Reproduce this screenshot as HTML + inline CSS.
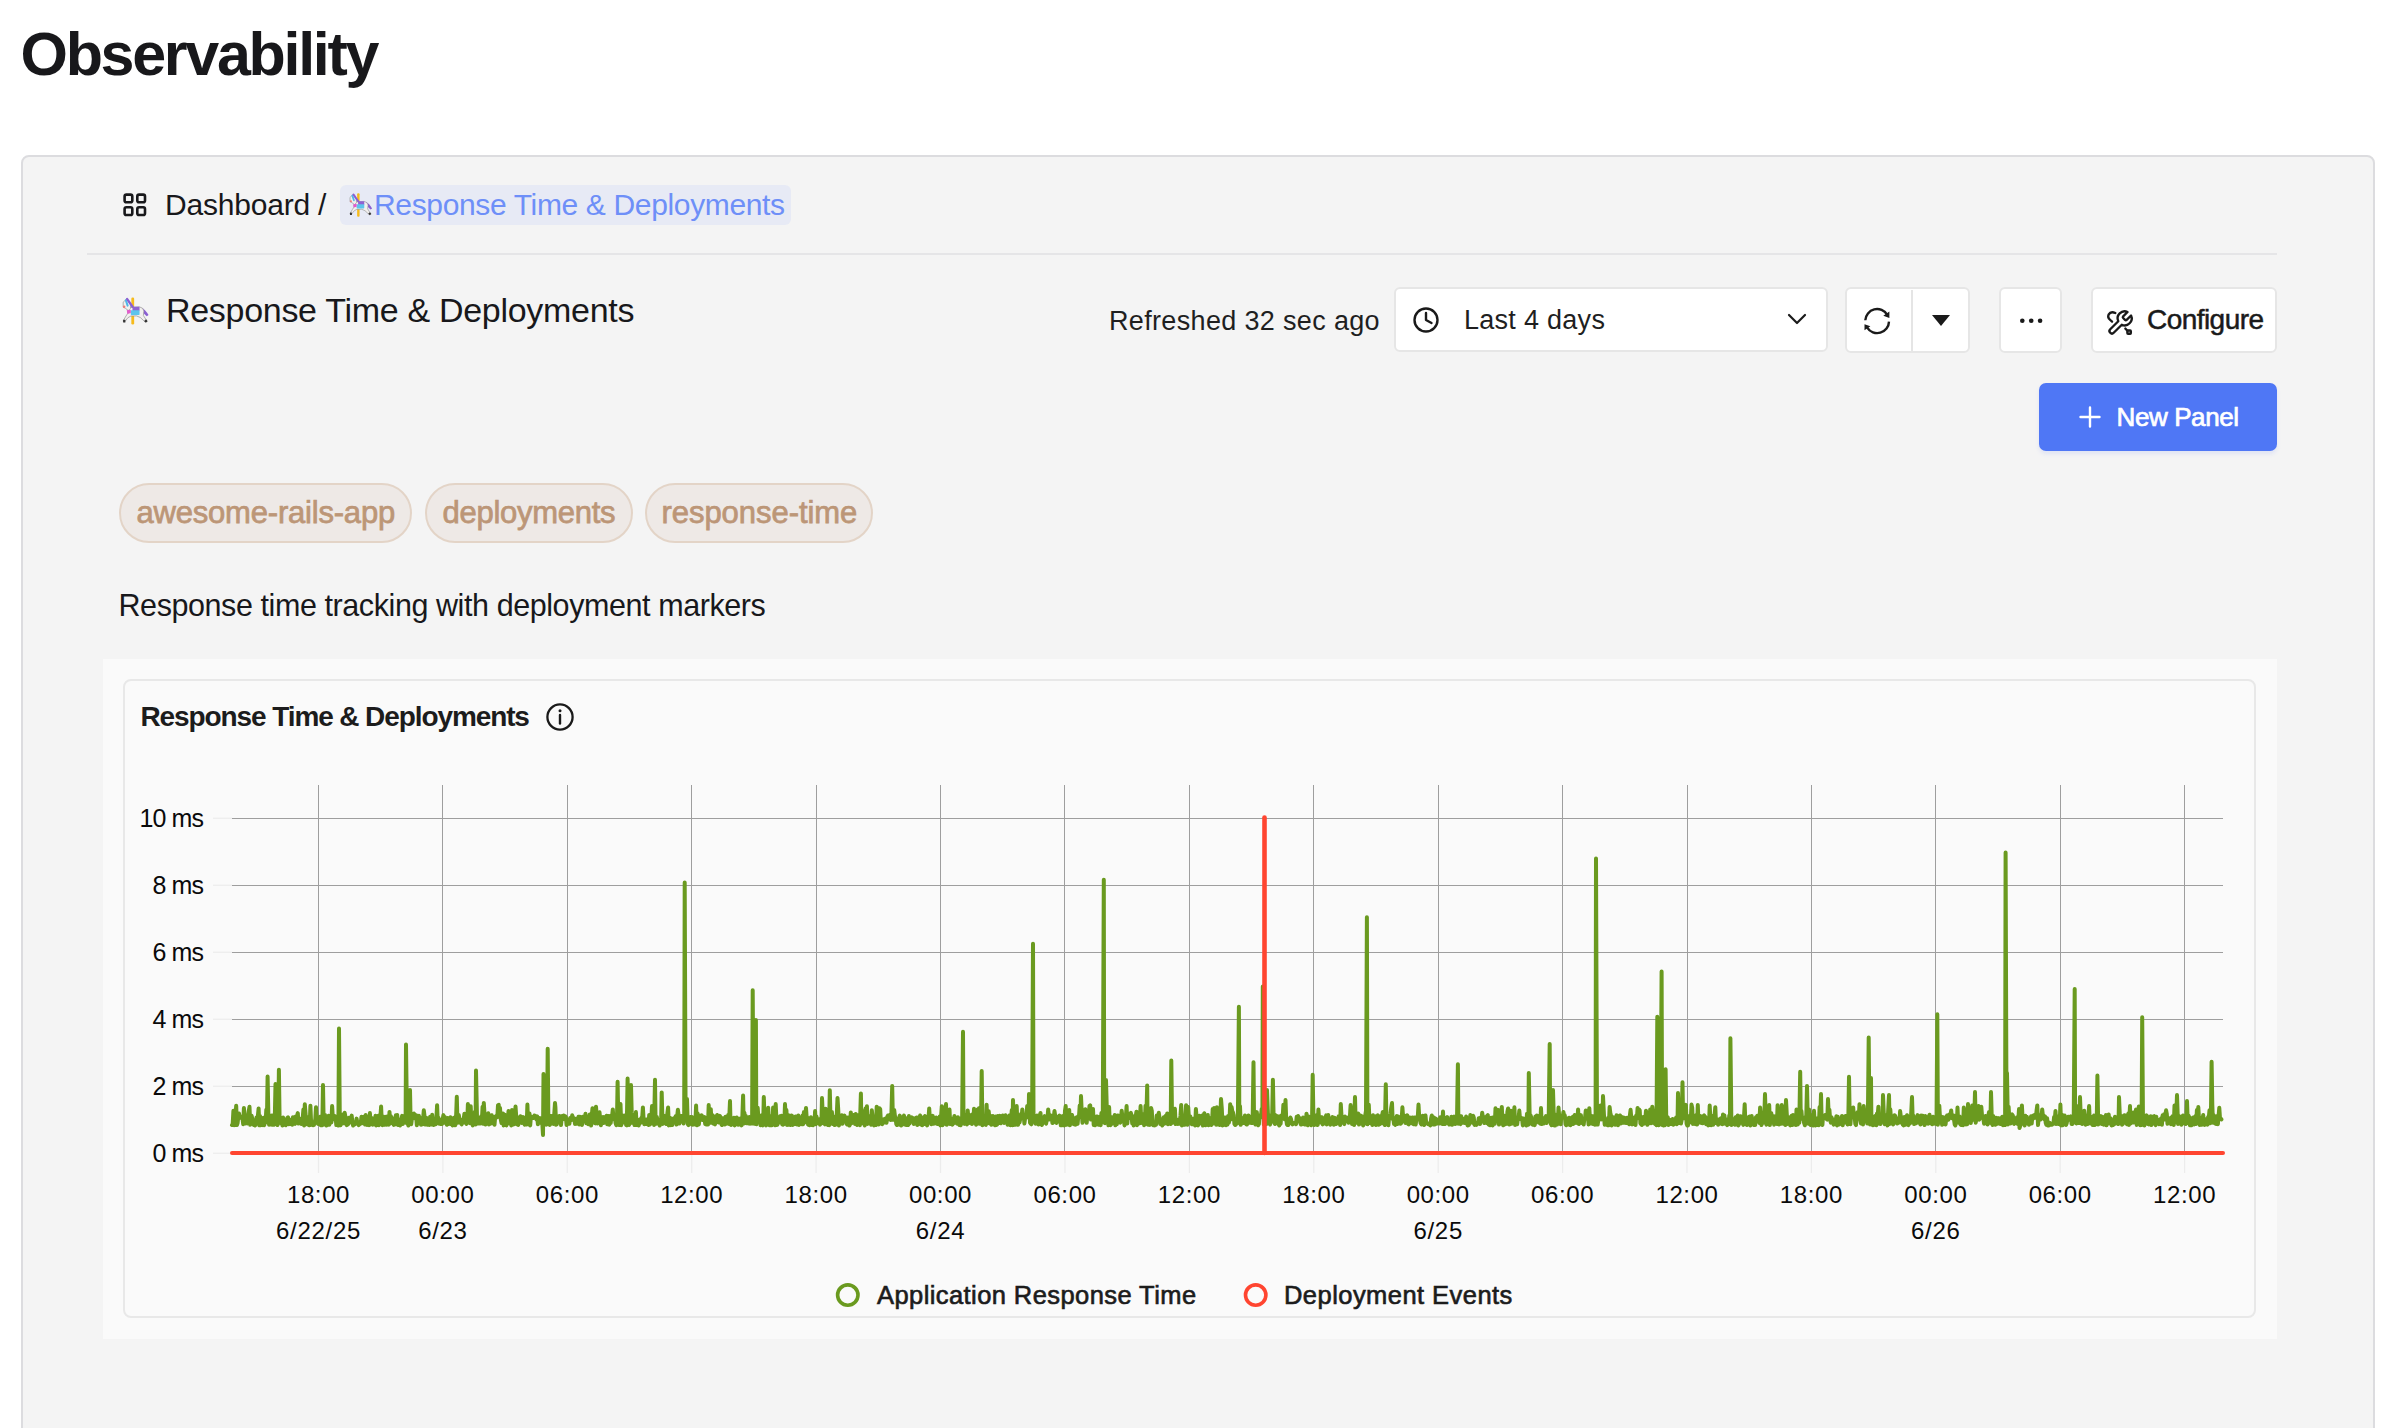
<!DOCTYPE html>
<html><head><meta charset="utf-8"><title>Observability</title>
<style>
html,body{margin:0;padding:0;width:2394px;height:1428px;overflow:hidden;background:#ffffff;font-family:"Liberation Sans", sans-serif;}
.t{position:absolute;white-space:nowrap;line-height:1;}
.c{text-align:center;}
.box{position:absolute;box-sizing:border-box;}
.btn{background:#fff;border:2px solid #e6e6e6;border-radius:6px;}
.ab{position:absolute;overflow:visible;}
</style></head><body>
<div class="t" style="left:20.5px;top:24.4px;font-size:61px;font-weight:700;color:#18181b;letter-spacing:-2.3px;">Observability</div>
<div class="box" style="left:21px;top:155px;width:2354px;height:1300px;border:2px solid #dcdcdf;border-radius:8px;background:#f4f4f4"></div>
<svg class="ab" style="left:120px;top:190px" width="30" height="30" viewBox="0 0 30 30">
<g fill="none" stroke="#18181b" stroke-width="2.6">
<rect x="4.6" y="4.6" width="7.7" height="7.7" rx="1.8"/><rect x="17.3" y="4.6" width="7.7" height="7.7" rx="1.8"/>
<rect x="4.6" y="17.3" width="7.7" height="7.7" rx="1.8"/><rect x="17.3" y="17.3" width="7.7" height="7.7" rx="1.8"/>
</g></svg>
<div class="t" style="left:165.0px;top:189.6px;font-size:30px;font-weight:400;color:#18181b;letter-spacing:-0.2px;">Dashboard /</div>
<div class="box" style="left:340px;top:185px;width:451px;height:40px;border-radius:6px;background:#e7eaf5"></div>
<svg class="ab" style="left:348.5px;top:193px" width="23.5" height="24" viewBox="0 0 24 24">
<rect x="8.3" y="0" width="2.5" height="24" rx="1.1" fill="#f6bb1c"/>
<path d="M17.3 9 Q20.8 10.5 23.6 15.6 L22 16.6 Q19.6 14.2 17.3 12.8 Z" fill="#8b5fd3"/>
<path d="M5.5 9 L15.5 8.3 Q19 9 19.5 12 L19 16 L21.8 20.3 L20.6 21.8 L16.3 17.8 L13 16.4 L8 16.4 L5.2 18 L2.4 21.6 L0.9 21 L3.5 16.5 L5.2 14 Z" fill="#f2f0ee" stroke="#8d8d8d" stroke-width="0.6" stroke-linejoin="round"/>
<path d="M1 4.2 L4.2 1.2 L7.6 6 L7.6 9.6 L5.6 11.6 L3 9.6 L1.1 8.6 Z" fill="#f2f0ee" stroke="#8d8d8d" stroke-width="0.6" stroke-linejoin="round"/>
<path d="M3.4 2.4 L5 7.2" stroke="#4fb6e8" stroke-width="1.8" stroke-linecap="round"/>
<path d="M4.6 1.4 L9.4 8.2" stroke="#8b5fd3" stroke-width="2.1" stroke-linecap="round"/>
<rect x="9.3" y="8.2" width="6.3" height="3.8" rx="0.6" fill="#8e63d2"/>
<rect x="7.8" y="11.3" width="7.8" height="4.2" rx="0.6" fill="#5ec4ec"/>
<path d="M4.2 11.4 L7.8 10.8 L7.8 13.8 L4.8 14.6 Z" fill="#e25ccb"/>
<circle cx="1.9" cy="8.2" r="1.1" fill="#f07a7a"/>
<rect x="1" y="19.8" width="2" height="2.4" fill="#333"/>
<rect x="20.2" y="19.8" width="2.2" height="2.3" fill="#333" transform="rotate(-40 21.3 21)"/>
</svg>
<div class="t" style="left:374.0px;top:189.6px;font-size:30px;font-weight:400;color:#6e8ff8;letter-spacing:-0.35px;">Response Time &amp; Deployments</div>
<div class="box" style="left:87px;top:253px;width:2190px;height:2px;background:#e5e5e7"></div>
<svg class="ab" style="left:121.5px;top:297px" width="27" height="28" viewBox="0 0 24 24">
<rect x="8.3" y="0" width="2.5" height="24" rx="1.1" fill="#f6bb1c"/>
<path d="M17.3 9 Q20.8 10.5 23.6 15.6 L22 16.6 Q19.6 14.2 17.3 12.8 Z" fill="#8b5fd3"/>
<path d="M5.5 9 L15.5 8.3 Q19 9 19.5 12 L19 16 L21.8 20.3 L20.6 21.8 L16.3 17.8 L13 16.4 L8 16.4 L5.2 18 L2.4 21.6 L0.9 21 L3.5 16.5 L5.2 14 Z" fill="#f2f0ee" stroke="#8d8d8d" stroke-width="0.6" stroke-linejoin="round"/>
<path d="M1 4.2 L4.2 1.2 L7.6 6 L7.6 9.6 L5.6 11.6 L3 9.6 L1.1 8.6 Z" fill="#f2f0ee" stroke="#8d8d8d" stroke-width="0.6" stroke-linejoin="round"/>
<path d="M3.4 2.4 L5 7.2" stroke="#4fb6e8" stroke-width="1.8" stroke-linecap="round"/>
<path d="M4.6 1.4 L9.4 8.2" stroke="#8b5fd3" stroke-width="2.1" stroke-linecap="round"/>
<rect x="9.3" y="8.2" width="6.3" height="3.8" rx="0.6" fill="#8e63d2"/>
<rect x="7.8" y="11.3" width="7.8" height="4.2" rx="0.6" fill="#5ec4ec"/>
<path d="M4.2 11.4 L7.8 10.8 L7.8 13.8 L4.8 14.6 Z" fill="#e25ccb"/>
<circle cx="1.9" cy="8.2" r="1.1" fill="#f07a7a"/>
<rect x="1" y="19.8" width="2" height="2.4" fill="#333"/>
<rect x="20.2" y="19.8" width="2.2" height="2.3" fill="#333" transform="rotate(-40 21.3 21)"/>
</svg>
<div class="t" style="left:166.0px;top:293.2px;font-size:34px;font-weight:400;color:#18181b;letter-spacing:-0.3px;">Response Time &amp; Deployments</div>
<div class="t" style="left:1109.0px;top:307.5px;font-size:27px;font-weight:400;color:#1f1f1f;letter-spacing:0.34px;">Refreshed 32 sec ago</div>
<div class="box btn" style="left:1394px;top:287px;width:434px;height:65px"></div>
<svg class="ab" style="left:1410px;top:304px" width="32" height="32" viewBox="0 0 32 32">
<circle cx="16" cy="16" r="11.5" fill="none" stroke="#1a1a1a" stroke-width="2.4"/>
<path d="M16 9 V16 L21.5 19" fill="none" stroke="#1a1a1a" stroke-width="2.4" stroke-linecap="round" stroke-linejoin="round"/></svg>
<div class="t" style="left:1464.0px;top:306.9px;font-size:27px;font-weight:400;color:#1f1f1f;letter-spacing:0.28px;">Last 4 days</div>
<svg class="ab" style="left:1786px;top:310px" width="22" height="20" viewBox="0 0 22 20">
<path d="M3 5 L11 13 L19 5" fill="none" stroke="#1a1a1a" stroke-width="2.2" stroke-linecap="round" stroke-linejoin="round"/></svg>
<div class="box btn" style="left:1845px;top:287px;width:125px;height:66px"></div>
<div class="box" style="left:1911px;top:290px;width:2px;height:61px;background:#e5e5e5"></div>
<svg class="ab" style="left:1860px;top:304px" width="34" height="34" viewBox="0 0 34 34">
<g fill="none" stroke="#1a1a1a" stroke-width="2.4" stroke-linecap="butt">
<path d="M5.3 16.3 A11.8 11.8 0 0 1 27.2 10.8"/><path d="M29 17.6 A11.8 11.8 0 0 1 7.2 23.6"/></g>
<path d="M29.4 7.6 L29.4 13.9 L23.3 11.8 Z" fill="#1a1a1a"/><path d="M4.5 20.2 L4.5 26.3 L10.4 22.2 Z" fill="#1a1a1a"/></svg>
<svg class="ab" style="left:1930px;top:313px" width="22" height="16" viewBox="0 0 22 16"><path d="M2 2 H20 L11 13 Z" fill="#1a1a1a"/></svg>
<div class="box btn" style="left:1999px;top:287px;width:63px;height:66px"></div>
<svg class="ab" style="left:2016px;top:312px" width="30" height="18" viewBox="0 0 30 18"><circle cx="6.3" cy="8.7" r="2.3" fill="#1a1a1a"/><circle cx="15.2" cy="8.7" r="2.3" fill="#1a1a1a"/><circle cx="24.1" cy="8.7" r="2.3" fill="#1a1a1a"/></svg>
<div class="box btn" style="left:2091px;top:287px;width:186px;height:66px"></div>
<svg class="ab" style="left:2106px;top:309px" width="28" height="28" viewBox="0 0 24 24">
<g fill="none" stroke="#1a1a1a" stroke-width="2" stroke-linecap="round" stroke-linejoin="round">
<path d="M14.7 6.3a1 1 0 0 0 0 1.4l1.6 1.6a1 1 0 0 0 1.4 0l3.77-3.77a6 6 0 0 1-7.94 7.94l-6.91 6.91a2.12 2.12 0 0 1-3-3l6.91-6.91a6 6 0 0 1 7.94-7.94l-3.76 3.76z"/>
<path d="M8 3.4 Q4 1.6 2.2 4.8 Q1.2 7.2 3.2 9 L5.2 10.8"/><path d="M16.6 16.8 L18.4 18.6"/><rect x="18.3" y="18.4" width="3" height="2.8" rx="0.6"/></g></svg>
<div class="t" style="left:2147.0px;top:305.9px;font-size:28px;font-weight:400;color:#1a1a1a;letter-spacing:-0.55px;-webkit-text-stroke:0.5px #1a1a1a;">Configure</div>
<div class="box" style="left:2039px;top:383px;width:238px;height:68px;border-radius:7px;background:#4f77f5;box-shadow:0 3px 4px rgba(79,119,245,0.12)"></div>
<svg class="ab" style="left:2078px;top:405px" width="24" height="24" viewBox="0 0 24 24"><path d="M12 2.5 V21.5 M2.5 12 H21.5" stroke="#fff" stroke-width="2.4" stroke-linecap="round"/></svg>
<div class="t" style="left:2116.5px;top:403.7px;font-size:26px;font-weight:400;color:#ffffff;letter-spacing:-0.4px;-webkit-text-stroke:0.7px #fff;">New Panel</div>
<div class="box" style="left:119px;top:483px;width:293px;height:60px;border:2px solid #e3d4c7;border-radius:30px;background:#eee9e6;box-sizing:border-box"></div>
<div class="t" style="left:136.5px;top:496.8px;font-size:31px;font-weight:400;color:#bc9677;letter-spacing:-0.2px;-webkit-text-stroke:0.75px #bc9677;">awesome-rails-app</div>
<div class="box" style="left:425px;top:483px;width:208px;height:60px;border:2px solid #e3d4c7;border-radius:30px;background:#eee9e6;box-sizing:border-box"></div>
<div class="t" style="left:442.5px;top:496.8px;font-size:31px;font-weight:400;color:#bc9677;letter-spacing:-0.27px;-webkit-text-stroke:0.75px #bc9677;">deployments</div>
<div class="box" style="left:645px;top:483px;width:228px;height:60px;border:2px solid #e3d4c7;border-radius:30px;background:#eee9e6;box-sizing:border-box"></div>
<div class="t" style="left:661.5px;top:496.8px;font-size:31px;font-weight:400;color:#bc9677;letter-spacing:-0.05px;-webkit-text-stroke:0.75px #bc9677;">response-time</div>
<div class="t" style="left:118.5px;top:589.8px;font-size:30.5px;font-weight:400;color:#18181b;letter-spacing:-0.42px;">Response time tracking with deployment markers</div>
<div class="box" style="left:103px;top:659px;width:2174px;height:680px;background:#fafafa"></div>
<div class="box" style="left:123px;top:679px;width:2133px;height:639px;border:2px solid #e8e8e8;border-radius:8px;box-sizing:border-box;background:#fafafa"></div>
<div class="t" style="left:140.5px;top:703.3px;font-size:28px;font-weight:700;color:#1c1c1c;letter-spacing:-1.1px;">Response Time &amp; Deployments</div>
<svg class="ab" style="left:542px;top:699px" width="36" height="36" viewBox="0 0 36 36"><circle cx="18" cy="18" r="12.6" fill="none" stroke="#1a1a1a" stroke-width="2.3"/><path d="M18 16 V24.5" stroke="#1a1a1a" stroke-width="2.4" stroke-linecap="round"/><circle cx="18" cy="11.8" r="1.5" fill="#1a1a1a"/></svg>
<svg class="ab" style="left:0;top:0" width="2394" height="1428" viewBox="0 0 2394 1428"><path d="M213 818.3 H232" stroke="#ececec" stroke-width="1.2"/><path d="M232 818.5 H2223" stroke="#9e9e9e" stroke-width="1"/><path d="M213 885.3 H232" stroke="#ececec" stroke-width="1.2"/><path d="M232 885.5 H2223" stroke="#9e9e9e" stroke-width="1"/><path d="M213 952.3 H232" stroke="#ececec" stroke-width="1.2"/><path d="M232 952.5 H2223" stroke="#9e9e9e" stroke-width="1"/><path d="M213 1019.3 H232" stroke="#ececec" stroke-width="1.2"/><path d="M232 1019.5 H2223" stroke="#9e9e9e" stroke-width="1"/><path d="M213 1086.3 H232" stroke="#ececec" stroke-width="1.2"/><path d="M232 1086.5 H2223" stroke="#9e9e9e" stroke-width="1"/><path d="M213 1153.3 H232" stroke="#ececec" stroke-width="1.2"/><path d="M232 1153.5 H2223" stroke="#9e9e9e" stroke-width="1"/><path d="M318.5 785 V1153" stroke="#9e9e9e" stroke-width="1"/><path d="M318.5 1153 V1173" stroke="#ececec" stroke-width="1.2"/><path d="M442.5 785 V1153" stroke="#9e9e9e" stroke-width="1"/><path d="M442.9 1153 V1173" stroke="#ececec" stroke-width="1.2"/><path d="M567.5 785 V1153" stroke="#9e9e9e" stroke-width="1"/><path d="M567.3 1153 V1173" stroke="#ececec" stroke-width="1.2"/><path d="M691.5 785 V1153" stroke="#9e9e9e" stroke-width="1"/><path d="M691.7 1153 V1173" stroke="#ececec" stroke-width="1.2"/><path d="M816.5 785 V1153" stroke="#9e9e9e" stroke-width="1"/><path d="M816.1 1153 V1173" stroke="#ececec" stroke-width="1.2"/><path d="M940.5 785 V1153" stroke="#9e9e9e" stroke-width="1"/><path d="M940.5 1153 V1173" stroke="#ececec" stroke-width="1.2"/><path d="M1064.5 785 V1153" stroke="#9e9e9e" stroke-width="1"/><path d="M1065.0 1153 V1173" stroke="#ececec" stroke-width="1.2"/><path d="M1189.5 785 V1153" stroke="#9e9e9e" stroke-width="1"/><path d="M1189.4 1153 V1173" stroke="#ececec" stroke-width="1.2"/><path d="M1313.5 785 V1153" stroke="#9e9e9e" stroke-width="1"/><path d="M1313.8 1153 V1173" stroke="#ececec" stroke-width="1.2"/><path d="M1438.5 785 V1153" stroke="#9e9e9e" stroke-width="1"/><path d="M1438.2 1153 V1173" stroke="#ececec" stroke-width="1.2"/><path d="M1562.5 785 V1153" stroke="#9e9e9e" stroke-width="1"/><path d="M1562.6 1153 V1173" stroke="#ececec" stroke-width="1.2"/><path d="M1687.5 785 V1153" stroke="#9e9e9e" stroke-width="1"/><path d="M1687.0 1153 V1173" stroke="#ececec" stroke-width="1.2"/><path d="M1811.5 785 V1153" stroke="#9e9e9e" stroke-width="1"/><path d="M1811.4 1153 V1173" stroke="#ececec" stroke-width="1.2"/><path d="M1935.5 785 V1153" stroke="#9e9e9e" stroke-width="1"/><path d="M1935.8 1153 V1173" stroke="#ececec" stroke-width="1.2"/><path d="M2060.5 785 V1153" stroke="#9e9e9e" stroke-width="1"/><path d="M2060.2 1153 V1173" stroke="#ececec" stroke-width="1.2"/><path d="M2184.5 785 V1153" stroke="#9e9e9e" stroke-width="1"/><path d="M2184.6 1153 V1173" stroke="#ececec" stroke-width="1.2"/>
<path d="M232.0,1125.0 L232.7,1123.9 L233.4,1110.8 L234.1,1125.2 L234.8,1119.4 L235.5,1115.3 L236.2,1105.7 L236.9,1125.1 L237.6,1123.1 L238.3,1116.8 L239.0,1113.5 L239.7,1117.9 L240.4,1117.7 L241.1,1116.5 L241.8,1117.4 L242.5,1118.6 L243.2,1124.2 L243.9,1108.0 L244.6,1117.1 L245.3,1123.4 L246.0,1117.7 L246.7,1117.6 L247.4,1123.4 L248.1,1115.9 L248.8,1110.5 L249.5,1106.8 L250.2,1124.8 L250.9,1119.6 L251.6,1115.6 L252.3,1118.6 L253.0,1122.8 L253.7,1125.0 L254.4,1124.0 L255.1,1125.5 L255.8,1123.8 L256.5,1117.4 L257.2,1119.7 L257.9,1115.6 L258.6,1108.4 L259.3,1125.3 L260.0,1116.0 L260.7,1125.2 L261.4,1122.9 L262.1,1124.7 L262.8,1125.1 L263.5,1117.7 L264.2,1125.2 L264.9,1123.0 L265.6,1122.6 L266.3,1109.7 L267.0,1115.7 L267.6,1076.5 L268.4,1117.3 L269.1,1124.8 L269.8,1115.7 L270.5,1116.3 L271.2,1115.7 L271.9,1124.7 L272.6,1117.8 L273.3,1115.2 L274.0,1124.8 L274.7,1123.6 L275.5,1084.0 L276.1,1119.6 L276.8,1116.1 L277.5,1125.0 L278.2,1123.1 L278.9,1069.7 L279.6,1119.1 L280.3,1122.8 L281.0,1123.0 L281.7,1118.2 L282.4,1125.5 L283.1,1117.4 L283.8,1122.9 L284.5,1124.7 L285.2,1123.7 L285.9,1125.1 L286.6,1124.1 L287.3,1117.9 L288.0,1117.3 L288.7,1124.2 L289.4,1123.1 L290.1,1123.3 L290.8,1123.9 L291.5,1119.5 L292.2,1124.7 L292.9,1117.2 L293.6,1117.8 L294.3,1117.4 L295.0,1123.9 L295.7,1116.5 L296.4,1118.7 L297.1,1115.8 L297.8,1113.1 L298.5,1123.5 L299.2,1119.2 L299.9,1119.3 L300.6,1118.9 L301.3,1124.0 L302.0,1119.2 L302.7,1118.3 L303.4,1109.4 L304.1,1125.4 L304.8,1104.2 L305.5,1112.8 L306.2,1123.2 L306.9,1124.2 L307.6,1118.7 L308.3,1117.1 L309.0,1125.3 L309.7,1125.3 L310.4,1105.7 L311.1,1122.9 L311.8,1123.8 L312.5,1125.1 L313.2,1125.2 L313.9,1124.9 L314.6,1123.2 L315.3,1119.1 L316.0,1107.2 L316.7,1119.1 L317.4,1119.5 L318.1,1124.0 L318.8,1124.0 L319.5,1118.3 L320.2,1116.8 L320.9,1125.3 L321.6,1123.3 L322.3,1125.2 L323.0,1085.0 L323.7,1124.6 L324.4,1124.2 L325.1,1115.1 L325.8,1122.6 L326.5,1125.5 L327.2,1124.0 L327.9,1120.0 L328.6,1115.7 L329.3,1124.8 L330.0,1116.2 L330.7,1115.6 L331.4,1122.5 L332.1,1106.0 L332.8,1116.9 L333.5,1119.3 L334.2,1115.8 L334.9,1117.1 L335.6,1116.5 L336.3,1125.1 L337.0,1123.0 L337.7,1116.9 L338.4,1125.5 L339.0,1028.5 L339.8,1119.7 L340.5,1125.3 L341.2,1119.0 L341.9,1117.5 L342.6,1123.4 L343.3,1114.2 L344.0,1123.3 L344.7,1112.8 L345.4,1116.5 L346.1,1124.0 L346.8,1125.1 L347.5,1122.6 L348.2,1124.1 L348.9,1117.8 L349.6,1122.7 L350.3,1119.3 L351.0,1119.3 L351.7,1115.6 L352.4,1122.8 L353.1,1125.5 L353.8,1124.6 L354.5,1124.6 L355.2,1123.2 L355.9,1122.7 L356.6,1118.6 L357.3,1122.5 L358.0,1124.2 L358.7,1125.2 L359.4,1122.7 L360.1,1124.0 L360.8,1122.6 L361.5,1116.8 L362.2,1117.3 L362.9,1123.3 L363.6,1116.8 L364.3,1122.7 L365.0,1124.5 L365.7,1115.1 L366.4,1118.5 L367.1,1125.0 L367.8,1122.8 L368.5,1122.8 L369.2,1125.1 L369.9,1113.1 L370.6,1123.8 L371.3,1117.9 L372.0,1118.1 L372.7,1124.7 L373.4,1124.0 L374.1,1118.9 L374.8,1124.3 L375.5,1115.8 L376.2,1125.4 L376.9,1117.6 L377.6,1124.3 L378.3,1115.7 L379.0,1125.2 L379.7,1116.6 L380.4,1116.8 L381.1,1106.6 L381.8,1122.7 L382.5,1125.1 L383.2,1116.5 L383.9,1123.9 L384.6,1124.8 L385.3,1124.6 L386.0,1116.8 L386.7,1124.8 L387.4,1116.5 L388.1,1124.0 L388.8,1124.7 L389.5,1111.9 L390.2,1123.5 L390.9,1116.3 L391.6,1122.6 L392.3,1118.8 L393.0,1118.5 L393.7,1124.9 L394.4,1123.5 L395.1,1124.3 L395.8,1115.3 L396.5,1122.8 L397.2,1115.0 L397.9,1124.9 L398.6,1119.8 L399.3,1124.4 L400.0,1125.5 L400.7,1122.6 L401.4,1119.0 L402.1,1115.9 L402.8,1124.1 L403.5,1119.0 L404.2,1119.8 L404.9,1115.6 L405.6,1122.7 L406.0,1044.5 L407.0,1122.6 L407.7,1123.4 L408.4,1125.5 L409.1,1116.8 L410.0,1090.0 L410.5,1115.2 L411.2,1124.2 L411.9,1119.1 L412.6,1115.9 L413.3,1118.4 L414.0,1113.6 L414.7,1115.6 L415.4,1118.4 L416.1,1115.1 L416.8,1125.2 L417.5,1117.8 L418.2,1123.6 L418.9,1115.8 L419.6,1123.0 L420.3,1118.1 L421.0,1124.8 L421.7,1122.8 L422.4,1124.3 L423.1,1118.8 L423.8,1110.3 L424.5,1115.8 L425.2,1124.6 L425.9,1122.6 L426.6,1118.1 L427.3,1124.7 L428.0,1119.5 L428.7,1118.9 L429.4,1124.9 L430.1,1116.7 L430.8,1124.5 L431.5,1124.6 L432.2,1114.8 L432.9,1123.8 L433.6,1125.0 L434.3,1124.7 L435.0,1118.4 L435.7,1124.3 L436.4,1118.2 L437.1,1105.2 L437.8,1123.0 L438.5,1117.7 L439.2,1123.8 L439.9,1119.6 L440.6,1124.0 L441.3,1123.9 L442.0,1124.0 L442.7,1119.0 L443.4,1115.1 L444.1,1122.7 L444.8,1116.9 L445.5,1123.1 L446.2,1123.0 L446.9,1124.8 L447.6,1118.1 L448.3,1123.3 L449.0,1123.8 L449.7,1123.0 L450.4,1117.2 L451.1,1124.2 L451.8,1123.5 L452.5,1125.4 L453.2,1124.8 L453.9,1117.7 L454.6,1125.2 L455.3,1125.2 L456.0,1119.8 L456.8,1096.7 L457.4,1119.7 L458.1,1122.6 L458.8,1115.0 L459.5,1119.0 L460.2,1122.6 L460.9,1123.1 L461.6,1124.4 L462.3,1122.8 L463.0,1119.3 L463.7,1119.0 L464.4,1113.8 L465.1,1122.7 L465.8,1119.2 L466.5,1123.9 L467.2,1122.9 L467.9,1104.1 L468.6,1118.0 L469.3,1122.5 L470.0,1123.2 L470.7,1106.2 L471.4,1123.6 L472.1,1116.7 L472.8,1125.4 L473.5,1117.8 L474.2,1119.3 L474.9,1111.7 L475.6,1124.4 L476.0,1070.5 L477.0,1117.6 L477.7,1118.8 L478.4,1123.6 L479.1,1118.0 L479.8,1123.6 L480.5,1123.6 L481.2,1116.3 L481.9,1119.8 L482.6,1106.7 L483.3,1123.8 L483.8,1103.0 L484.7,1116.8 L485.4,1124.6 L486.1,1122.8 L486.8,1120.0 L487.5,1117.7 L488.2,1113.2 L488.9,1124.5 L489.6,1115.8 L490.3,1123.8 L491.0,1117.4 L491.7,1115.2 L492.4,1119.9 L493.1,1123.3 L493.8,1118.4 L494.5,1124.8 L495.2,1116.5 L495.9,1117.7 L496.6,1115.7 L497.3,1117.1 L498.0,1105.1 L498.7,1104.9 L499.4,1115.5 L500.0,1108.0 L500.8,1119.7 L501.5,1123.0 L502.2,1119.7 L502.9,1113.5 L503.6,1125.4 L504.3,1116.8 L505.0,1114.8 L505.7,1119.0 L506.4,1125.4 L507.1,1123.4 L507.8,1122.6 L508.5,1111.0 L509.2,1123.2 L509.9,1117.3 L510.6,1119.5 L511.3,1125.5 L512.0,1110.1 L512.7,1123.1 L513.4,1124.5 L514.1,1122.7 L514.8,1123.4 L515.5,1106.5 L516.2,1116.1 L516.9,1124.3 L517.6,1119.6 L518.3,1124.9 L519.0,1117.5 L519.7,1118.8 L520.4,1116.2 L521.1,1118.3 L521.8,1123.0 L522.5,1119.2 L523.2,1117.1 L523.9,1122.8 L524.6,1124.6 L525.3,1119.2 L526.0,1124.5 L526.7,1124.5 L527.4,1104.5 L528.1,1124.3 L528.8,1116.3 L529.5,1113.5 L530.2,1125.4 L530.9,1116.5 L531.6,1117.7 L532.3,1118.0 L533.0,1117.8 L533.7,1117.9 L534.4,1115.6 L535.1,1115.7 L535.8,1117.7 L536.5,1119.5 L537.2,1116.4 L537.9,1124.2 L538.6,1118.0 L539.3,1119.1 L540.0,1118.1 L540.7,1119.8 L541.4,1123.2 L542.1,1119.5 L543.0,1135.0 L543.5,1074.0 L544.2,1122.7 L544.9,1118.0 L545.6,1122.5 L546.3,1124.7 L547.0,1124.2 L547.7,1048.8 L548.4,1123.3 L549.1,1118.9 L549.8,1124.9 L550.5,1116.0 L551.2,1123.8 L551.9,1118.2 L552.6,1115.9 L553.3,1123.9 L554.0,1118.2 L555.0,1103.0 L555.4,1107.3 L556.1,1124.8 L556.8,1124.2 L557.5,1118.2 L558.2,1119.7 L558.9,1116.1 L559.6,1115.9 L560.3,1116.7 L561.0,1125.1 L561.7,1118.3 L562.4,1116.0 L563.1,1117.0 L563.8,1115.5 L564.5,1119.0 L565.2,1116.3 L565.9,1117.2 L566.6,1125.1 L567.3,1124.1 L568.0,1124.0 L568.7,1120.0 L569.4,1123.8 L570.1,1118.1 L570.8,1119.6 L571.5,1119.9 L572.2,1115.3 L572.9,1117.4 L573.6,1119.8 L574.3,1118.3 L575.0,1124.1 L575.7,1118.9 L576.4,1123.8 L577.1,1123.0 L577.8,1118.6 L578.5,1116.7 L579.2,1124.5 L579.9,1116.8 L580.6,1123.3 L581.3,1119.8 L582.0,1124.9 L582.7,1116.7 L583.4,1116.9 L584.1,1116.5 L584.8,1118.9 L585.5,1113.8 L586.2,1123.2 L586.9,1118.2 L587.6,1117.2 L588.3,1124.2 L589.0,1123.6 L589.7,1114.6 L590.4,1117.1 L591.1,1125.5 L591.8,1115.3 L592.5,1108.3 L593.2,1115.9 L593.9,1119.4 L594.6,1122.9 L595.3,1123.3 L596.0,1106.7 L596.7,1115.7 L597.4,1123.6 L598.1,1122.7 L598.8,1115.8 L599.5,1112.3 L600.2,1119.2 L600.9,1125.3 L601.6,1117.8 L602.3,1123.1 L603.0,1116.9 L603.7,1123.1 L604.4,1117.2 L605.1,1122.6 L605.8,1118.3 L606.5,1115.8 L607.2,1124.2 L607.9,1123.4 L608.6,1116.0 L609.3,1124.7 L610.0,1115.9 L610.7,1123.0 L611.4,1117.1 L612.1,1116.0 L612.8,1109.4 L613.5,1119.0 L614.2,1118.8 L614.9,1117.7 L615.6,1123.2 L616.3,1125.2 L617.0,1118.8 L617.6,1081.8 L618.4,1123.7 L619.1,1125.0 L619.8,1123.8 L620.5,1104.0 L621.2,1125.2 L621.9,1119.2 L622.6,1115.6 L623.3,1115.7 L624.0,1118.7 L624.7,1122.7 L625.4,1115.2 L626.1,1124.9 L626.8,1125.3 L627.6,1078.6 L628.2,1119.7 L628.9,1125.1 L629.6,1123.8 L630.3,1116.7 L631.0,1085.0 L631.7,1112.9 L632.4,1122.8 L633.1,1119.8 L633.8,1116.8 L634.5,1125.1 L635.2,1116.6 L635.9,1112.1 L636.6,1125.1 L637.3,1124.8 L638.0,1119.9 L638.7,1125.4 L639.4,1122.7 L640.1,1119.3 L640.8,1122.7 L641.5,1117.7 L642.2,1117.6 L642.9,1107.4 L643.6,1119.3 L644.3,1124.3 L645.0,1123.0 L645.7,1124.0 L646.4,1119.4 L647.1,1122.8 L647.8,1124.1 L648.5,1124.9 L649.2,1115.0 L649.9,1124.6 L650.6,1123.3 L651.3,1119.9 L652.0,1106.0 L652.7,1119.1 L653.4,1118.9 L654.1,1125.0 L655.0,1079.7 L655.5,1117.5 L656.2,1123.7 L656.9,1117.1 L657.6,1123.3 L658.3,1119.7 L659.0,1123.0 L659.7,1125.5 L660.4,1122.9 L661.1,1123.0 L661.7,1092.4 L662.5,1123.9 L663.2,1119.4 L663.9,1115.7 L664.6,1118.1 L665.3,1122.9 L666.0,1124.0 L666.7,1119.9 L667.4,1113.0 L668.1,1107.6 L668.8,1125.4 L669.5,1117.4 L670.2,1122.9 L670.9,1125.1 L671.6,1118.6 L672.3,1125.1 L673.0,1119.3 L673.7,1119.2 L674.4,1118.1 L675.1,1117.4 L675.8,1116.1 L676.5,1124.5 L677.2,1116.0 L677.9,1109.8 L678.6,1115.3 L679.3,1123.6 L680.0,1119.7 L680.7,1119.9 L681.4,1116.1 L682.1,1116.0 L682.8,1119.8 L683.5,1123.5 L684.2,1115.4 L684.7,882.6 L685.6,1118.6 L686.3,1119.4 L687.0,1099.0 L687.7,1123.9 L688.4,1125.1 L689.1,1124.6 L689.8,1123.9 L690.5,1117.1 L691.2,1123.4 L691.9,1116.9 L692.6,1124.8 L693.3,1118.1 L694.0,1124.4 L694.7,1123.8 L695.4,1122.5 L696.1,1105.5 L696.8,1125.3 L697.5,1113.3 L698.2,1116.3 L698.9,1124.4 L699.6,1115.8 L700.3,1116.3 L701.0,1117.6 L701.7,1115.4 L702.4,1120.0 L703.1,1117.5 L703.8,1117.9 L704.5,1117.0 L705.2,1124.1 L705.9,1124.3 L706.6,1124.5 L707.3,1117.5 L708.0,1124.6 L708.7,1105.0 L709.4,1123.0 L710.1,1119.0 L710.8,1109.2 L711.5,1122.7 L712.2,1115.0 L712.9,1116.6 L713.6,1123.7 L714.3,1116.6 L715.0,1124.4 L715.7,1117.1 L716.4,1117.6 L717.1,1115.0 L717.8,1115.9 L718.5,1122.6 L719.2,1119.4 L719.9,1115.9 L720.6,1117.9 L721.3,1124.0 L722.0,1125.0 L722.7,1118.2 L723.4,1119.8 L724.1,1118.5 L724.8,1124.6 L725.5,1116.7 L726.2,1123.8 L726.9,1117.3 L727.6,1117.9 L728.3,1114.8 L729.0,1123.9 L730.0,1101.0 L730.4,1118.4 L731.1,1125.0 L731.8,1122.8 L732.5,1124.2 L733.2,1122.8 L733.9,1117.8 L734.6,1125.4 L735.3,1118.4 L736.0,1118.5 L736.7,1117.5 L737.4,1124.3 L738.1,1124.6 L738.8,1123.1 L739.5,1124.4 L740.2,1118.5 L740.9,1123.9 L741.6,1125.3 L742.3,1118.2 L743.1,1095.6 L743.7,1123.5 L744.4,1112.8 L745.1,1119.4 L745.8,1116.0 L746.5,1123.3 L747.2,1119.0 L747.9,1118.9 L748.6,1123.4 L749.3,1117.1 L750.0,1123.7 L750.7,1119.4 L751.4,1118.6 L752.1,1123.5 L752.7,990.2 L753.5,1118.4 L754.2,1123.8 L754.9,1112.3 L755.9,1020.0 L756.3,1124.3 L757.0,1115.6 L757.7,1107.8 L758.4,1118.2 L759.1,1116.5 L759.8,1118.2 L760.5,1125.2 L761.2,1115.5 L761.9,1124.9 L762.6,1125.4 L763.3,1119.1 L763.8,1097.0 L764.7,1123.4 L765.4,1123.0 L766.1,1125.4 L766.8,1119.8 L767.5,1123.1 L768.2,1107.7 L768.9,1123.3 L769.6,1125.2 L770.3,1122.7 L771.0,1115.9 L771.7,1125.3 L772.4,1124.0 L773.1,1107.6 L773.8,1118.7 L774.5,1116.8 L775.2,1125.3 L775.7,1104.0 L776.6,1123.4 L777.3,1124.8 L778.0,1122.7 L778.7,1122.8 L779.4,1118.3 L780.1,1116.2 L780.8,1117.0 L781.5,1115.8 L782.2,1124.4 L782.9,1124.7 L783.6,1117.8 L784.3,1124.1 L785.0,1104.1 L785.7,1119.6 L786.4,1110.1 L787.1,1124.9 L787.8,1122.7 L788.5,1115.3 L789.2,1124.8 L789.9,1123.2 L790.6,1124.9 L791.3,1115.4 L792.0,1115.8 L792.7,1124.9 L793.4,1124.4 L794.1,1123.0 L794.8,1123.8 L795.5,1116.5 L796.2,1117.5 L796.9,1124.6 L797.6,1123.4 L798.3,1115.5 L799.0,1124.9 L799.7,1123.0 L800.4,1117.9 L801.1,1117.4 L801.8,1124.2 L802.5,1115.5 L803.2,1124.2 L803.9,1112.1 L804.6,1122.6 L805.3,1115.1 L806.0,1107.9 L806.7,1118.5 L807.4,1117.6 L808.1,1124.5 L808.8,1124.9 L809.5,1125.2 L810.2,1123.8 L810.9,1117.2 L811.6,1125.0 L812.3,1119.4 L813.0,1125.2 L813.7,1124.0 L814.4,1123.8 L815.1,1111.1 L815.8,1124.2 L816.5,1116.4 L817.2,1122.5 L817.9,1123.0 L818.6,1122.6 L819.3,1119.3 L820.0,1124.8 L820.7,1123.7 L821.4,1123.4 L822.0,1098.0 L822.8,1115.4 L823.5,1123.3 L824.2,1116.6 L824.9,1124.4 L825.6,1108.8 L826.3,1123.9 L827.0,1122.7 L827.7,1124.9 L828.4,1117.1 L829.1,1125.2 L829.8,1090.3 L830.5,1118.1 L831.2,1117.3 L831.9,1111.9 L832.6,1124.0 L833.3,1119.8 L834.0,1116.6 L834.7,1125.0 L835.4,1122.9 L836.1,1124.5 L836.8,1114.0 L837.5,1098.0 L838.2,1109.1 L838.9,1125.4 L839.6,1119.8 L840.3,1118.6 L841.0,1118.7 L841.7,1115.2 L842.4,1123.8 L843.1,1116.1 L843.8,1118.2 L844.5,1115.6 L845.2,1118.5 L845.9,1117.5 L846.6,1123.8 L847.3,1124.5 L848.0,1117.6 L848.7,1124.8 L849.4,1125.5 L850.1,1124.2 L850.8,1112.4 L851.5,1123.3 L852.2,1118.3 L852.9,1119.6 L853.6,1115.1 L854.3,1117.9 L855.0,1124.0 L855.7,1114.0 L856.4,1123.4 L857.1,1124.9 L857.8,1116.8 L858.5,1115.2 L859.2,1123.1 L859.9,1125.1 L860.9,1093.5 L861.3,1118.9 L862.0,1116.8 L862.7,1111.0 L863.4,1123.6 L864.1,1123.7 L864.8,1125.5 L865.5,1108.6 L866.2,1114.1 L866.9,1106.2 L867.6,1123.9 L868.3,1116.7 L869.0,1123.3 L869.7,1116.2 L870.4,1123.2 L871.1,1124.7 L871.8,1110.3 L872.5,1116.1 L873.2,1118.9 L873.9,1125.4 L874.6,1124.0 L875.3,1122.7 L876.0,1125.0 L876.7,1106.7 L877.4,1122.6 L878.1,1118.3 L878.8,1124.5 L879.5,1108.3 L880.2,1109.2 L880.9,1122.7 L881.6,1118.9 L882.3,1124.2 L883.0,1123.2 L883.7,1122.5 L884.4,1119.2 L885.1,1118.7 L885.8,1118.6 L886.5,1122.8 L887.2,1117.0 L887.9,1115.6 L888.6,1118.2 L889.3,1119.1 L890.0,1114.7 L890.7,1120.0 L891.4,1114.0 L892.2,1086.0 L892.8,1116.4 L893.5,1119.8 L894.2,1109.9 L894.9,1115.8 L895.6,1118.4 L896.3,1124.0 L897.0,1125.0 L897.7,1123.3 L898.4,1124.4 L899.1,1118.3 L899.8,1115.6 L900.5,1125.0 L901.2,1125.4 L901.9,1123.8 L902.6,1123.4 L903.3,1117.3 L904.0,1115.6 L904.7,1124.5 L905.4,1118.1 L906.1,1125.1 L906.8,1123.7 L907.5,1123.7 L908.2,1124.9 L908.9,1116.1 L909.6,1123.4 L910.3,1117.3 L911.0,1120.0 L911.7,1117.4 L912.4,1118.8 L913.1,1118.1 L913.8,1123.9 L914.5,1118.4 L915.2,1118.9 L915.9,1122.8 L916.6,1117.4 L917.3,1125.1 L918.0,1117.4 L918.7,1118.8 L919.4,1117.7 L920.1,1115.5 L920.8,1124.4 L921.5,1119.4 L922.2,1125.2 L922.9,1117.4 L923.6,1124.3 L924.3,1117.8 L925.0,1116.2 L925.7,1118.2 L926.4,1124.4 L927.1,1125.4 L927.8,1119.7 L928.5,1118.6 L929.2,1108.4 L929.9,1119.0 L930.6,1116.9 L931.3,1124.2 L932.0,1118.5 L932.7,1115.9 L933.4,1123.8 L934.1,1122.6 L934.8,1123.5 L935.5,1123.2 L936.2,1117.5 L936.9,1119.9 L937.6,1124.1 L938.3,1124.1 L939.0,1124.0 L939.7,1116.6 L940.4,1125.4 L941.1,1116.2 L941.8,1106.2 L942.5,1125.2 L943.2,1119.7 L943.9,1107.7 L944.6,1123.7 L945.3,1115.6 L946.0,1104.1 L946.7,1124.7 L947.4,1122.9 L948.1,1112.3 L948.8,1116.0 L949.5,1109.6 L950.2,1124.1 L950.9,1118.2 L951.6,1122.7 L952.3,1124.6 L953.0,1123.8 L953.7,1123.1 L954.4,1116.0 L955.1,1122.7 L955.8,1119.7 L956.5,1119.8 L957.2,1123.7 L957.9,1117.2 L958.6,1123.5 L959.3,1124.9 L960.0,1122.7 L960.7,1125.2 L961.4,1117.9 L962.1,1122.8 L963.0,1031.7 L963.5,1123.0 L964.2,1123.8 L964.9,1119.2 L965.6,1123.0 L966.3,1115.1 L967.0,1124.4 L967.7,1110.4 L968.4,1117.9 L969.1,1123.0 L969.8,1115.0 L970.5,1118.5 L971.2,1117.5 L971.9,1124.0 L972.6,1114.3 L973.3,1122.8 L974.0,1108.8 L974.7,1118.3 L975.4,1119.7 L976.1,1124.8 L976.8,1123.1 L977.5,1109.4 L978.2,1117.0 L978.9,1108.2 L979.6,1123.8 L980.3,1123.5 L981.0,1122.7 L981.7,1071.1 L982.4,1125.2 L983.1,1124.0 L983.8,1124.1 L984.5,1117.5 L985.2,1124.3 L985.9,1124.8 L986.6,1104.7 L987.3,1123.1 L988.0,1118.9 L988.7,1111.3 L989.4,1118.5 L990.1,1123.8 L990.8,1116.1 L991.5,1124.8 L992.2,1119.8 L992.9,1115.9 L993.6,1117.7 L994.3,1122.7 L995.0,1125.2 L995.7,1116.6 L996.4,1125.1 L997.1,1124.5 L997.8,1116.0 L998.5,1123.2 L999.2,1116.8 L999.9,1115.8 L1000.6,1123.3 L1001.3,1122.6 L1002.0,1119.3 L1002.7,1115.5 L1003.4,1116.0 L1004.1,1123.0 L1004.8,1118.5 L1005.5,1115.3 L1006.2,1116.1 L1006.9,1118.8 L1007.6,1124.8 L1008.3,1116.6 L1009.0,1123.1 L1009.7,1115.3 L1010.4,1125.2 L1011.1,1118.3 L1011.8,1110.1 L1012.5,1125.2 L1013.0,1100.0 L1013.9,1124.9 L1014.6,1116.9 L1015.3,1124.7 L1016.0,1123.5 L1016.7,1106.1 L1017.4,1124.7 L1018.1,1124.8 L1018.8,1115.5 L1019.5,1122.6 L1020.2,1119.1 L1020.9,1113.9 L1021.6,1117.7 L1022.3,1109.4 L1023.0,1117.4 L1023.7,1115.5 L1024.4,1123.6 L1025.1,1118.2 L1025.8,1118.1 L1026.5,1115.5 L1027.2,1106.0 L1027.9,1117.2 L1028.6,1115.5 L1029.0,1094.0 L1030.0,1122.6 L1030.7,1123.7 L1031.4,1124.3 L1032.1,1118.6 L1033.0,943.7 L1033.5,1116.8 L1034.2,1118.1 L1034.9,1116.5 L1035.6,1123.8 L1036.3,1118.3 L1037.0,1115.6 L1037.7,1119.1 L1038.4,1124.6 L1039.1,1115.2 L1039.8,1122.7 L1040.5,1112.9 L1041.2,1124.3 L1041.9,1124.9 L1042.6,1123.0 L1043.3,1118.4 L1044.0,1117.6 L1044.7,1116.2 L1045.4,1122.7 L1046.1,1123.6 L1046.8,1119.8 L1047.5,1118.2 L1048.2,1109.4 L1048.9,1116.6 L1049.6,1119.4 L1050.3,1115.2 L1051.0,1116.1 L1051.7,1116.3 L1052.4,1123.1 L1053.1,1122.9 L1053.8,1116.7 L1054.5,1111.0 L1055.2,1115.7 L1055.9,1118.0 L1056.6,1123.0 L1057.3,1119.2 L1058.0,1117.5 L1058.7,1116.3 L1059.4,1115.6 L1060.1,1116.5 L1060.8,1125.3 L1061.5,1118.6 L1062.2,1125.2 L1062.9,1116.0 L1063.6,1119.6 L1064.3,1125.5 L1065.0,1110.7 L1065.7,1106.1 L1066.4,1124.8 L1067.1,1124.5 L1067.8,1123.1 L1068.5,1116.0 L1069.2,1109.9 L1069.9,1125.3 L1070.6,1117.1 L1071.3,1117.1 L1072.0,1115.0 L1072.7,1118.4 L1073.4,1124.1 L1074.1,1123.5 L1074.8,1124.5 L1075.5,1124.7 L1076.2,1117.4 L1076.9,1123.4 L1077.6,1123.8 L1078.3,1116.3 L1079.0,1116.4 L1079.7,1105.6 L1080.4,1116.8 L1081.0,1096.0 L1081.8,1113.9 L1082.5,1122.8 L1083.2,1114.2 L1083.9,1117.6 L1084.6,1116.0 L1085.3,1109.2 L1086.0,1119.0 L1086.7,1122.8 L1087.4,1115.1 L1088.1,1118.1 L1088.8,1113.4 L1089.5,1106.0 L1090.2,1105.3 L1090.9,1119.6 L1091.6,1115.6 L1092.3,1119.0 L1093.0,1108.9 L1093.7,1124.9 L1094.4,1116.8 L1095.1,1125.3 L1095.8,1124.1 L1096.5,1116.4 L1097.2,1116.5 L1097.9,1122.8 L1098.6,1124.8 L1099.3,1124.3 L1100.0,1116.8 L1100.7,1125.2 L1101.4,1113.1 L1102.1,1118.9 L1102.8,1116.8 L1103.8,879.8 L1104.2,1122.6 L1104.9,1123.1 L1105.6,1119.5 L1106.0,1080.0 L1107.0,1115.9 L1107.7,1117.0 L1108.4,1125.3 L1109.1,1107.1 L1109.8,1123.0 L1110.5,1125.1 L1111.2,1124.2 L1111.9,1117.3 L1112.6,1123.3 L1113.3,1119.5 L1114.0,1123.2 L1114.7,1115.1 L1115.4,1125.3 L1116.1,1117.0 L1116.8,1124.3 L1117.5,1115.4 L1118.2,1115.4 L1118.9,1119.8 L1119.6,1117.8 L1120.3,1122.7 L1121.0,1118.7 L1121.7,1110.7 L1122.4,1116.7 L1123.1,1115.8 L1123.8,1118.6 L1124.5,1125.4 L1125.2,1115.4 L1125.9,1116.1 L1126.6,1106.1 L1127.3,1123.6 L1128.0,1115.2 L1128.7,1116.8 L1129.4,1118.0 L1130.1,1113.5 L1130.8,1112.9 L1131.5,1115.1 L1132.2,1123.4 L1132.9,1116.2 L1133.6,1125.4 L1134.3,1124.7 L1135.0,1117.0 L1135.7,1116.5 L1136.4,1111.7 L1137.1,1125.2 L1137.8,1116.6 L1138.5,1112.4 L1139.2,1123.4 L1139.9,1119.5 L1140.6,1106.1 L1141.3,1122.9 L1142.0,1113.7 L1142.7,1119.2 L1143.4,1116.7 L1144.1,1125.2 L1144.8,1123.5 L1145.5,1105.8 L1146.2,1122.6 L1147.2,1085.4 L1147.6,1124.4 L1148.3,1124.8 L1149.0,1124.4 L1149.7,1124.9 L1150.4,1124.4 L1151.1,1108.0 L1151.8,1110.7 L1152.5,1124.1 L1153.2,1125.1 L1153.9,1124.8 L1154.6,1125.3 L1155.3,1122.7 L1156.0,1124.8 L1156.7,1115.6 L1157.4,1119.4 L1158.1,1118.8 L1158.8,1112.8 L1159.5,1117.7 L1160.2,1124.1 L1160.9,1123.5 L1161.6,1122.5 L1162.3,1125.5 L1163.0,1119.9 L1163.7,1117.3 L1164.4,1123.7 L1165.1,1123.1 L1165.8,1115.7 L1166.5,1119.1 L1167.2,1113.4 L1167.9,1124.2 L1168.6,1123.3 L1169.3,1118.0 L1170.0,1122.7 L1170.7,1124.0 L1171.3,1060.5 L1172.1,1123.0 L1172.8,1117.7 L1173.5,1118.4 L1174.2,1111.5 L1174.9,1108.7 L1175.6,1124.1 L1176.3,1119.3 L1177.0,1122.6 L1177.7,1123.9 L1178.4,1119.7 L1179.1,1123.7 L1179.8,1122.8 L1180.5,1115.2 L1181.2,1105.0 L1181.9,1125.4 L1182.6,1122.6 L1183.3,1123.9 L1184.0,1116.7 L1184.7,1124.8 L1185.4,1116.0 L1186.1,1105.2 L1186.8,1119.1 L1187.5,1124.8 L1188.2,1107.1 L1188.9,1117.6 L1189.6,1120.0 L1190.3,1116.5 L1191.0,1122.6 L1191.7,1124.2 L1192.4,1124.3 L1193.1,1118.8 L1193.8,1123.5 L1194.5,1124.8 L1195.2,1125.4 L1195.9,1109.0 L1196.6,1117.1 L1197.3,1117.8 L1198.0,1125.4 L1198.7,1124.4 L1199.4,1115.8 L1200.1,1116.5 L1200.8,1123.2 L1201.5,1123.0 L1202.2,1115.6 L1202.9,1125.5 L1203.6,1115.9 L1204.3,1113.2 L1205.0,1123.4 L1205.7,1125.2 L1206.4,1119.3 L1207.1,1118.4 L1207.8,1115.0 L1208.5,1125.2 L1209.2,1118.7 L1209.9,1118.3 L1210.6,1122.7 L1211.3,1125.0 L1212.0,1123.3 L1212.7,1109.0 L1213.4,1123.4 L1214.1,1108.0 L1214.8,1119.3 L1215.5,1119.5 L1216.2,1124.7 L1216.9,1107.3 L1217.6,1124.6 L1218.3,1116.9 L1219.0,1124.6 L1219.7,1125.0 L1220.4,1115.9 L1221.0,1099.0 L1221.8,1108.7 L1222.5,1125.4 L1223.2,1122.7 L1223.9,1124.9 L1224.6,1117.4 L1225.3,1117.4 L1226.0,1125.3 L1226.7,1124.7 L1227.4,1124.5 L1228.1,1116.1 L1228.8,1122.7 L1229.5,1119.5 L1230.2,1104.2 L1230.9,1119.4 L1231.6,1107.0 L1232.3,1111.3 L1233.0,1112.5 L1233.7,1115.2 L1234.4,1123.9 L1235.1,1125.0 L1235.8,1124.5 L1236.5,1122.6 L1237.2,1123.3 L1237.9,1117.6 L1238.9,1006.7 L1239.3,1116.3 L1240.0,1106.2 L1240.7,1124.8 L1241.4,1122.5 L1242.1,1118.4 L1242.8,1118.3 L1243.5,1123.0 L1244.2,1119.9 L1244.9,1115.5 L1245.6,1123.0 L1246.3,1124.4 L1247.0,1124.4 L1247.7,1122.8 L1248.4,1115.6 L1249.1,1122.7 L1249.8,1116.4 L1250.5,1118.7 L1251.2,1123.0 L1251.9,1118.3 L1252.6,1123.0 L1253.5,1062.2 L1254.0,1116.6 L1254.7,1122.9 L1255.4,1124.5 L1256.1,1115.7 L1256.8,1112.1 L1257.5,1123.1 L1258.2,1125.3 L1258.9,1124.1 L1259.6,1115.2 L1260.3,1115.5 L1261.0,1116.3 L1261.7,1109.0 L1262.4,1117.4 L1262.8,986.5 L1263.8,1124.4 L1264.5,1116.5 L1265.2,1119.8 L1265.9,1123.3 L1266.6,1123.9 L1267.0,1090.0 L1268.0,1116.0 L1268.7,1115.0 L1269.4,1123.4 L1270.1,1124.6 L1270.8,1119.1 L1271.5,1116.7 L1272.2,1115.0 L1272.9,1079.8 L1273.6,1116.2 L1274.3,1122.7 L1275.0,1124.0 L1275.7,1115.2 L1276.4,1117.2 L1277.1,1116.0 L1277.8,1118.7 L1278.5,1124.0 L1279.2,1125.5 L1279.9,1116.3 L1280.6,1123.9 L1281.3,1115.5 L1282.0,1116.4 L1282.7,1116.4 L1283.4,1104.7 L1284.1,1106.4 L1284.8,1119.3 L1285.5,1100.0 L1286.2,1118.8 L1286.9,1124.3 L1287.6,1125.0 L1288.3,1124.9 L1289.0,1119.1 L1289.7,1122.6 L1290.4,1117.6 L1291.1,1119.3 L1291.8,1123.4 L1292.5,1124.4 L1293.2,1123.4 L1293.9,1122.9 L1294.6,1123.0 L1295.3,1123.6 L1296.0,1124.2 L1296.7,1116.7 L1297.4,1119.3 L1298.1,1116.0 L1298.8,1118.3 L1299.5,1118.0 L1300.2,1122.8 L1300.9,1124.5 L1301.6,1124.4 L1302.3,1123.9 L1303.0,1117.6 L1303.7,1123.7 L1304.4,1124.4 L1305.1,1122.8 L1305.8,1124.5 L1306.5,1113.7 L1307.2,1123.1 L1307.9,1125.3 L1308.6,1116.4 L1309.3,1117.2 L1310.0,1122.7 L1310.7,1123.3 L1311.4,1125.2 L1312.1,1117.0 L1312.7,1074.8 L1313.5,1123.4 L1314.2,1125.0 L1314.9,1116.6 L1315.6,1122.6 L1316.3,1124.7 L1317.0,1115.0 L1317.7,1125.0 L1318.4,1109.6 L1319.1,1119.8 L1319.8,1117.1 L1320.5,1117.0 L1321.2,1122.7 L1321.9,1117.2 L1322.6,1124.4 L1323.3,1123.1 L1324.0,1120.0 L1324.7,1123.5 L1325.4,1118.0 L1326.1,1115.4 L1326.8,1124.4 L1327.5,1116.0 L1328.2,1115.0 L1328.9,1123.2 L1329.6,1119.2 L1330.3,1124.7 L1331.0,1122.7 L1331.7,1123.2 L1332.4,1117.1 L1333.1,1119.6 L1333.8,1124.7 L1334.5,1117.8 L1335.2,1123.3 L1335.9,1124.0 L1336.6,1123.5 L1337.3,1122.7 L1338.0,1117.9 L1338.7,1116.2 L1339.4,1118.0 L1340.1,1125.1 L1340.8,1104.1 L1341.5,1116.3 L1342.2,1118.1 L1342.9,1119.8 L1343.6,1122.9 L1344.3,1124.1 L1345.0,1116.4 L1345.7,1119.1 L1346.4,1119.4 L1347.1,1118.3 L1347.8,1117.6 L1348.5,1122.8 L1349.2,1116.9 L1349.9,1116.8 L1350.6,1105.0 L1351.3,1116.6 L1352.0,1124.1 L1352.7,1115.4 L1353.4,1117.2 L1354.1,1125.1 L1355.0,1097.0 L1355.5,1116.2 L1356.2,1122.8 L1356.9,1115.1 L1357.6,1115.2 L1358.3,1113.5 L1359.0,1124.6 L1359.7,1115.3 L1360.4,1122.7 L1361.1,1115.7 L1361.8,1123.7 L1362.5,1118.8 L1363.2,1125.5 L1363.9,1124.0 L1364.6,1116.7 L1365.3,1115.0 L1366.0,1110.9 L1366.9,917.2 L1367.4,1124.3 L1368.1,1113.6 L1368.8,1104.8 L1369.5,1122.9 L1370.2,1122.6 L1370.9,1119.7 L1371.6,1119.4 L1372.3,1125.1 L1373.0,1115.2 L1373.7,1116.9 L1374.4,1123.3 L1375.1,1122.8 L1375.8,1125.0 L1376.5,1116.0 L1377.2,1117.1 L1377.9,1115.3 L1378.6,1124.8 L1379.3,1123.0 L1380.0,1124.1 L1380.7,1123.2 L1381.4,1115.8 L1382.1,1115.4 L1382.8,1112.0 L1383.5,1123.6 L1384.2,1124.0 L1384.9,1125.0 L1385.8,1084.3 L1386.3,1114.5 L1387.0,1116.8 L1387.7,1119.7 L1388.4,1125.2 L1389.1,1117.4 L1389.8,1117.8 L1390.5,1113.3 L1391.2,1107.8 L1392.0,1103.0 L1392.6,1118.9 L1393.3,1117.8 L1394.0,1123.9 L1394.7,1119.5 L1395.4,1124.9 L1396.1,1123.1 L1396.8,1115.9 L1397.5,1124.0 L1398.2,1116.5 L1398.9,1119.8 L1399.6,1119.4 L1400.3,1123.8 L1401.0,1123.4 L1401.7,1118.6 L1402.4,1107.3 L1403.1,1116.8 L1403.8,1116.4 L1404.5,1115.5 L1405.2,1122.9 L1405.9,1122.8 L1406.6,1117.1 L1407.3,1115.3 L1408.0,1123.9 L1408.7,1124.4 L1409.4,1118.9 L1410.1,1117.5 L1410.8,1119.1 L1411.5,1123.2 L1412.2,1117.4 L1412.9,1117.4 L1413.6,1124.3 L1414.3,1117.6 L1415.0,1124.1 L1415.7,1124.4 L1416.4,1119.0 L1417.1,1116.7 L1417.8,1116.5 L1418.5,1104.5 L1419.2,1116.6 L1419.9,1118.9 L1420.6,1123.1 L1421.3,1124.4 L1422.0,1123.4 L1422.7,1115.7 L1423.4,1124.6 L1424.1,1125.0 L1424.8,1115.7 L1425.5,1115.5 L1426.2,1123.2 L1426.9,1122.8 L1427.6,1123.7 L1428.3,1124.3 L1429.0,1124.4 L1429.7,1123.5 L1430.4,1125.4 L1431.1,1118.5 L1431.8,1115.5 L1432.5,1117.1 L1433.2,1124.5 L1433.9,1117.4 L1434.6,1124.6 L1435.3,1122.8 L1436.0,1118.8 L1436.7,1123.7 L1437.4,1123.1 L1438.1,1123.2 L1438.8,1119.7 L1439.5,1123.6 L1440.2,1117.3 L1440.9,1119.5 L1441.6,1117.8 L1442.3,1124.1 L1443.0,1111.6 L1443.7,1124.0 L1444.4,1117.4 L1445.1,1124.0 L1445.8,1122.9 L1446.5,1118.2 L1447.2,1117.2 L1447.9,1122.6 L1448.6,1123.5 L1449.3,1124.5 L1450.0,1124.2 L1450.7,1124.3 L1451.4,1116.7 L1452.1,1124.8 L1452.8,1123.0 L1453.5,1119.9 L1454.2,1116.6 L1454.9,1124.1 L1455.6,1123.6 L1456.3,1123.6 L1457.0,1119.1 L1457.9,1064.2 L1458.4,1123.7 L1459.1,1123.5 L1459.8,1116.1 L1460.5,1124.2 L1461.2,1116.2 L1461.9,1122.6 L1462.6,1119.5 L1463.3,1122.7 L1464.0,1118.7 L1464.7,1123.0 L1465.4,1122.8 L1466.1,1116.6 L1466.8,1119.0 L1467.5,1125.4 L1468.2,1125.3 L1468.9,1125.0 L1469.6,1122.7 L1470.3,1115.1 L1471.0,1118.6 L1471.7,1116.3 L1472.4,1122.7 L1473.1,1115.7 L1473.8,1117.7 L1474.5,1124.9 L1475.2,1123.3 L1475.9,1123.4 L1476.6,1124.8 L1477.3,1124.0 L1478.0,1123.2 L1478.7,1118.2 L1479.4,1123.3 L1480.1,1123.9 L1480.8,1117.6 L1481.5,1119.0 L1482.2,1112.7 L1482.9,1117.6 L1483.6,1118.9 L1484.3,1123.1 L1485.0,1117.2 L1485.7,1119.4 L1486.4,1122.9 L1487.1,1115.9 L1487.8,1115.2 L1488.5,1124.3 L1489.2,1124.8 L1489.9,1125.1 L1490.6,1119.1 L1491.3,1117.8 L1492.0,1119.9 L1492.7,1125.4 L1493.4,1117.3 L1494.1,1118.5 L1494.8,1123.8 L1495.5,1108.3 L1496.2,1119.2 L1496.9,1119.5 L1497.6,1119.7 L1498.3,1110.1 L1499.0,1124.6 L1499.7,1123.1 L1500.4,1112.0 L1501.1,1123.4 L1501.8,1106.9 L1502.5,1122.7 L1503.2,1125.3 L1503.9,1117.8 L1504.6,1115.8 L1505.3,1124.3 L1506.0,1123.5 L1506.7,1123.8 L1507.4,1111.6 L1508.1,1108.5 L1508.8,1115.8 L1509.5,1124.6 L1510.2,1119.0 L1510.9,1110.7 L1511.6,1123.7 L1512.3,1123.5 L1513.0,1118.5 L1513.7,1119.4 L1514.4,1107.3 L1515.1,1125.0 L1515.8,1117.9 L1516.5,1118.5 L1517.2,1124.2 L1517.9,1118.4 L1518.6,1118.0 L1519.3,1110.6 L1520.0,1119.0 L1520.7,1118.6 L1521.4,1117.9 L1522.1,1118.8 L1522.8,1125.4 L1523.5,1118.5 L1524.2,1119.7 L1524.9,1124.6 L1525.6,1124.4 L1526.3,1125.5 L1527.0,1113.7 L1527.7,1119.3 L1528.4,1124.7 L1528.8,1073.0 L1529.8,1122.7 L1530.5,1115.2 L1531.2,1117.1 L1531.9,1124.0 L1532.6,1124.7 L1533.3,1124.7 L1534.0,1123.1 L1534.7,1125.2 L1535.4,1116.4 L1536.1,1122.8 L1536.8,1115.5 L1537.5,1118.7 L1538.2,1119.0 L1538.9,1116.0 L1539.6,1122.9 L1540.3,1123.7 L1541.0,1108.1 L1541.7,1124.1 L1542.4,1119.8 L1543.1,1118.0 L1543.8,1123.4 L1544.5,1118.0 L1545.2,1119.1 L1545.9,1116.1 L1546.6,1123.0 L1547.3,1116.4 L1548.0,1115.6 L1548.7,1117.6 L1549.7,1044.0 L1550.1,1116.7 L1550.8,1123.8 L1551.5,1125.2 L1552.2,1118.9 L1553.0,1090.0 L1553.6,1110.8 L1554.3,1125.5 L1555.0,1125.5 L1555.7,1114.8 L1556.4,1117.1 L1557.1,1124.6 L1557.8,1122.5 L1558.5,1107.5 L1559.2,1116.5 L1559.9,1119.2 L1560.6,1124.3 L1561.3,1117.1 L1562.0,1117.0 L1562.7,1117.2 L1563.4,1112.0 L1564.1,1115.3 L1564.8,1115.3 L1565.5,1124.1 L1566.2,1125.2 L1566.9,1118.8 L1567.6,1119.4 L1568.3,1124.5 L1569.0,1117.8 L1569.7,1119.1 L1570.4,1125.3 L1571.1,1124.1 L1571.8,1117.9 L1572.5,1117.1 L1573.2,1124.0 L1573.9,1117.5 L1574.6,1115.0 L1575.3,1115.3 L1576.0,1123.0 L1576.7,1115.8 L1577.4,1119.9 L1578.1,1109.5 L1578.8,1124.0 L1579.5,1123.3 L1580.2,1119.4 L1580.9,1115.1 L1581.6,1122.9 L1582.3,1122.7 L1583.0,1118.8 L1583.7,1124.6 L1584.4,1118.3 L1585.1,1117.2 L1585.8,1110.5 L1586.5,1116.4 L1587.2,1117.6 L1587.9,1116.5 L1588.6,1124.5 L1589.3,1108.2 L1590.0,1118.8 L1590.7,1123.4 L1591.4,1118.4 L1592.1,1116.1 L1592.8,1124.0 L1593.5,1123.1 L1594.2,1116.1 L1594.9,1124.7 L1595.6,1119.2 L1596.0,858.5 L1597.0,1124.5 L1597.7,1124.6 L1598.4,1119.4 L1599.1,1119.3 L1599.8,1118.9 L1600.5,1105.6 L1601.2,1119.5 L1601.9,1116.8 L1602.6,1118.4 L1603.0,1096.0 L1604.0,1115.8 L1604.7,1124.7 L1605.4,1122.9 L1606.1,1123.4 L1606.8,1123.2 L1607.5,1125.2 L1608.2,1117.7 L1608.9,1125.2 L1609.6,1107.0 L1610.3,1113.0 L1611.0,1115.6 L1611.7,1125.4 L1612.4,1123.1 L1613.1,1117.3 L1613.8,1124.3 L1614.5,1123.3 L1615.2,1124.7 L1615.9,1117.6 L1616.6,1115.3 L1617.3,1115.7 L1618.0,1125.2 L1618.7,1119.2 L1619.4,1117.6 L1620.1,1115.5 L1620.8,1123.6 L1621.5,1116.7 L1622.2,1118.6 L1622.9,1122.8 L1623.6,1117.6 L1624.3,1122.7 L1625.0,1117.9 L1625.7,1123.0 L1626.4,1123.0 L1627.1,1117.7 L1627.8,1123.1 L1628.5,1122.6 L1629.2,1124.3 L1629.9,1115.3 L1630.6,1109.8 L1631.3,1117.8 L1632.0,1124.4 L1632.7,1122.7 L1633.4,1117.9 L1634.1,1124.0 L1634.8,1117.2 L1635.5,1125.0 L1636.2,1115.6 L1636.9,1117.8 L1637.6,1108.0 L1638.3,1118.1 L1639.0,1109.4 L1639.7,1110.2 L1640.4,1123.3 L1641.1,1124.2 L1641.8,1125.0 L1642.5,1123.4 L1643.2,1117.0 L1643.9,1123.8 L1644.6,1116.6 L1645.3,1119.5 L1646.0,1110.7 L1646.7,1116.1 L1647.4,1124.8 L1648.1,1123.3 L1648.8,1117.1 L1649.5,1118.1 L1650.2,1109.5 L1650.9,1123.2 L1651.6,1123.1 L1652.3,1106.7 L1653.0,1112.9 L1653.7,1116.2 L1654.4,1123.3 L1655.1,1123.9 L1655.8,1119.0 L1656.5,1125.2 L1657.3,1016.8 L1657.9,1119.4 L1658.6,1125.2 L1659.3,1118.6 L1660.0,1118.6 L1660.7,1117.2 L1661.6,971.4 L1662.1,1124.9 L1662.8,1119.9 L1663.5,1125.5 L1664.2,1124.9 L1664.9,1125.1 L1665.6,1069.2 L1666.3,1123.9 L1667.0,1118.3 L1667.7,1117.2 L1668.4,1125.1 L1669.1,1119.5 L1669.8,1119.8 L1670.5,1123.9 L1671.2,1124.0 L1671.9,1123.6 L1672.6,1119.1 L1673.3,1124.7 L1674.0,1123.9 L1674.7,1119.5 L1675.4,1119.4 L1676.1,1117.6 L1676.8,1124.3 L1677.5,1122.6 L1678.0,1093.0 L1678.9,1123.0 L1679.6,1104.5 L1680.3,1123.1 L1681.0,1123.4 L1681.7,1119.8 L1682.5,1082.3 L1683.1,1118.5 L1683.8,1105.7 L1684.5,1117.9 L1685.2,1107.6 L1685.9,1104.9 L1686.6,1123.7 L1687.3,1125.4 L1688.0,1125.4 L1688.7,1116.3 L1689.4,1122.8 L1690.1,1119.3 L1690.8,1120.0 L1691.5,1104.6 L1692.2,1107.7 L1692.9,1124.0 L1693.6,1116.0 L1694.3,1117.9 L1695.0,1124.1 L1695.7,1115.5 L1696.4,1115.1 L1697.1,1124.5 L1697.8,1105.0 L1698.5,1122.9 L1699.2,1116.2 L1699.9,1119.0 L1700.6,1116.1 L1701.3,1123.0 L1702.0,1119.4 L1702.7,1123.3 L1703.4,1116.1 L1704.1,1115.4 L1704.8,1117.1 L1705.5,1117.1 L1706.2,1124.2 L1706.9,1118.2 L1707.6,1124.4 L1708.3,1125.4 L1709.0,1124.2 L1709.7,1105.5 L1710.4,1118.6 L1711.1,1125.3 L1711.8,1118.8 L1712.5,1116.0 L1713.2,1124.8 L1713.9,1115.7 L1714.6,1115.1 L1715.3,1107.2 L1716.0,1123.1 L1716.7,1122.8 L1717.4,1119.5 L1718.1,1124.8 L1718.8,1119.4 L1719.5,1123.8 L1720.2,1123.1 L1720.9,1118.3 L1721.6,1118.4 L1722.3,1124.3 L1723.0,1114.5 L1723.7,1119.1 L1724.4,1115.5 L1725.1,1123.7 L1725.8,1119.2 L1726.5,1122.8 L1727.2,1125.1 L1727.9,1124.3 L1728.6,1124.1 L1729.3,1115.5 L1730.0,1118.7 L1730.4,1038.2 L1731.4,1125.1 L1732.1,1123.4 L1732.8,1119.0 L1733.5,1123.5 L1734.2,1123.4 L1734.9,1124.7 L1735.6,1117.2 L1736.3,1124.6 L1737.0,1123.1 L1737.7,1115.6 L1738.4,1125.4 L1739.1,1123.9 L1739.8,1117.9 L1740.5,1116.2 L1741.2,1122.6 L1741.9,1119.4 L1742.6,1122.8 L1743.3,1124.9 L1744.0,1116.8 L1744.7,1104.2 L1745.4,1123.7 L1746.1,1124.2 L1746.8,1125.0 L1747.5,1117.4 L1748.2,1119.4 L1748.9,1124.0 L1749.6,1116.4 L1750.3,1125.4 L1751.0,1124.5 L1751.7,1116.1 L1752.4,1122.9 L1753.1,1123.4 L1753.8,1125.0 L1754.5,1125.1 L1755.2,1125.1 L1755.9,1117.2 L1756.6,1119.6 L1757.3,1115.7 L1758.0,1117.3 L1758.7,1119.4 L1759.4,1122.9 L1760.1,1107.5 L1760.8,1116.0 L1761.5,1125.1 L1762.2,1118.1 L1762.9,1123.0 L1763.6,1118.3 L1764.3,1116.3 L1765.0,1094.0 L1765.7,1116.2 L1766.4,1124.7 L1767.1,1113.7 L1767.8,1119.8 L1768.5,1117.2 L1769.2,1105.0 L1769.9,1125.1 L1770.6,1116.0 L1771.3,1113.2 L1772.0,1119.2 L1772.7,1119.2 L1773.4,1116.3 L1774.1,1124.7 L1774.8,1116.6 L1775.5,1117.6 L1776.2,1122.9 L1776.9,1123.8 L1777.6,1105.2 L1778.3,1117.6 L1779.0,1124.5 L1779.7,1118.1 L1780.4,1119.8 L1781.1,1123.8 L1781.8,1105.1 L1782.5,1117.2 L1783.2,1123.7 L1783.9,1115.2 L1784.6,1119.6 L1785.3,1125.1 L1786.0,1100.0 L1786.7,1112.7 L1787.4,1123.9 L1788.1,1117.2 L1788.8,1123.3 L1789.5,1117.6 L1790.2,1125.4 L1790.9,1119.1 L1791.6,1115.7 L1792.3,1125.0 L1793.0,1115.1 L1793.7,1124.4 L1794.4,1119.4 L1795.1,1122.8 L1795.8,1125.0 L1796.5,1109.5 L1797.2,1115.1 L1797.9,1124.4 L1798.6,1115.2 L1799.3,1122.7 L1800.2,1071.7 L1800.7,1115.3 L1801.4,1111.0 L1802.1,1118.7 L1802.8,1118.8 L1803.5,1119.5 L1804.2,1123.4 L1804.9,1125.3 L1805.6,1117.7 L1806.3,1115.4 L1807.0,1086.0 L1807.7,1116.7 L1808.4,1123.8 L1809.1,1109.6 L1809.8,1119.3 L1810.5,1124.9 L1811.2,1114.9 L1811.9,1119.3 L1812.6,1115.7 L1813.3,1125.5 L1814.0,1110.8 L1814.7,1123.7 L1815.4,1125.3 L1816.1,1124.8 L1816.8,1118.4 L1817.5,1125.0 L1818.2,1118.4 L1818.9,1125.2 L1819.6,1107.0 L1820.3,1118.1 L1821.0,1094.0 L1821.7,1123.4 L1822.4,1124.9 L1823.1,1115.5 L1823.8,1118.4 L1824.5,1116.3 L1825.2,1115.0 L1825.9,1117.8 L1826.6,1119.0 L1827.3,1119.7 L1828.0,1099.0 L1828.7,1115.1 L1829.4,1109.7 L1830.1,1119.0 L1830.8,1122.6 L1831.5,1117.3 L1832.2,1120.0 L1832.9,1122.9 L1833.6,1124.6 L1834.3,1119.5 L1835.0,1123.9 L1835.7,1122.5 L1836.4,1116.3 L1837.1,1125.4 L1837.8,1116.8 L1838.5,1122.7 L1839.2,1124.5 L1839.9,1122.6 L1840.6,1120.0 L1841.3,1123.3 L1842.0,1116.0 L1842.7,1125.2 L1843.4,1117.4 L1844.1,1119.4 L1844.8,1122.6 L1845.5,1116.0 L1846.2,1116.1 L1846.9,1119.6 L1847.6,1124.5 L1848.3,1119.7 L1849.0,1076.8 L1849.7,1117.4 L1850.4,1124.3 L1851.1,1115.6 L1851.8,1116.3 L1852.5,1114.8 L1853.2,1107.4 L1853.9,1116.9 L1854.6,1115.9 L1855.3,1123.8 L1856.0,1125.1 L1856.7,1115.3 L1857.4,1112.4 L1858.1,1117.6 L1858.8,1116.8 L1859.5,1104.2 L1860.2,1119.4 L1860.9,1123.5 L1861.6,1112.9 L1862.3,1112.9 L1863.0,1124.5 L1863.7,1106.0 L1864.4,1113.2 L1865.1,1117.7 L1865.8,1115.5 L1866.5,1117.2 L1867.2,1123.6 L1867.9,1116.9 L1868.7,1037.5 L1869.3,1106.8 L1870.0,1124.5 L1871.0,1078.0 L1871.4,1122.7 L1872.1,1116.6 L1872.8,1125.2 L1873.5,1125.1 L1874.2,1116.8 L1874.9,1116.2 L1875.6,1119.2 L1876.3,1125.3 L1877.0,1113.4 L1877.7,1114.9 L1878.4,1106.7 L1879.1,1123.7 L1879.8,1122.7 L1880.5,1123.9 L1881.2,1116.2 L1881.9,1116.8 L1882.6,1116.2 L1883.0,1095.0 L1884.0,1118.9 L1884.7,1124.2 L1885.4,1115.1 L1886.1,1118.7 L1886.8,1122.7 L1887.5,1125.4 L1888.2,1110.2 L1889.0,1095.0 L1889.6,1124.0 L1890.3,1109.3 L1891.0,1118.6 L1891.7,1123.3 L1892.4,1120.0 L1893.1,1124.4 L1893.8,1122.6 L1894.5,1115.2 L1895.2,1115.9 L1895.9,1122.6 L1896.6,1119.7 L1897.3,1123.6 L1898.0,1118.2 L1898.7,1118.9 L1899.4,1122.6 L1900.1,1111.0 L1900.8,1116.4 L1901.5,1122.8 L1902.2,1117.6 L1902.9,1124.7 L1903.6,1125.4 L1904.3,1117.1 L1905.0,1124.1 L1905.7,1124.7 L1906.4,1117.5 L1907.1,1115.2 L1907.8,1122.9 L1908.5,1125.1 L1909.2,1117.7 L1909.9,1123.3 L1910.6,1123.0 L1911.3,1111.3 L1912.0,1097.0 L1912.7,1119.3 L1913.4,1115.6 L1914.1,1124.1 L1914.8,1119.1 L1915.5,1119.9 L1916.2,1123.2 L1916.9,1118.9 L1917.6,1115.1 L1918.3,1122.6 L1919.0,1119.8 L1919.7,1119.5 L1920.4,1124.5 L1921.1,1115.4 L1921.8,1123.6 L1922.5,1115.7 L1923.2,1116.2 L1923.9,1117.0 L1924.6,1125.1 L1925.3,1115.9 L1926.0,1118.7 L1926.7,1119.4 L1927.4,1117.2 L1928.1,1123.7 L1928.8,1117.4 L1929.5,1114.7 L1930.2,1123.1 L1930.9,1122.6 L1931.6,1123.8 L1932.3,1124.2 L1933.0,1116.8 L1933.7,1118.4 L1934.4,1119.9 L1935.1,1123.7 L1935.8,1123.6 L1936.5,1124.0 L1937.3,1014.3 L1937.9,1124.7 L1938.6,1115.3 L1939.3,1105.7 L1940.0,1118.3 L1940.7,1119.2 L1941.4,1116.6 L1942.1,1124.8 L1942.8,1123.6 L1943.5,1117.2 L1944.2,1123.9 L1944.9,1122.7 L1945.6,1124.4 L1946.3,1117.5 L1947.0,1115.6 L1947.7,1117.0 L1948.4,1119.8 L1949.1,1114.5 L1949.8,1117.3 L1950.5,1115.4 L1951.2,1110.4 L1951.9,1118.3 L1952.6,1115.2 L1953.3,1115.2 L1954.0,1119.5 L1954.7,1124.5 L1955.4,1125.4 L1956.1,1115.5 L1956.8,1122.9 L1957.5,1107.6 L1958.2,1122.5 L1958.9,1117.5 L1959.6,1116.5 L1960.3,1124.2 L1961.0,1125.0 L1961.7,1119.7 L1962.4,1118.7 L1963.1,1125.2 L1963.8,1107.6 L1964.5,1117.6 L1965.2,1119.1 L1965.9,1124.6 L1966.6,1117.4 L1967.3,1124.3 L1968.0,1104.1 L1968.7,1116.7 L1969.4,1118.6 L1970.1,1117.0 L1970.8,1123.0 L1971.5,1115.8 L1972.2,1105.5 L1972.9,1117.6 L1973.6,1119.7 L1974.3,1117.3 L1975.0,1092.0 L1975.7,1122.7 L1976.4,1118.6 L1977.1,1110.0 L1977.8,1116.2 L1978.5,1105.9 L1979.2,1119.7 L1979.9,1118.1 L1980.6,1117.4 L1981.3,1106.7 L1982.0,1115.1 L1982.7,1118.2 L1983.4,1119.0 L1984.1,1123.8 L1984.8,1123.2 L1985.5,1116.0 L1986.2,1117.3 L1986.9,1116.9 L1987.6,1124.5 L1988.3,1116.1 L1989.0,1112.1 L1989.7,1122.7 L1990.4,1122.9 L1991.0,1092.0 L1991.8,1118.6 L1992.5,1125.1 L1993.2,1116.0 L1993.9,1122.7 L1994.6,1119.8 L1995.3,1124.7 L1996.0,1117.8 L1996.7,1123.9 L1997.4,1119.0 L1998.1,1118.2 L1998.8,1123.5 L1999.5,1118.5 L2000.2,1123.9 L2000.9,1117.9 L2001.6,1124.1 L2002.3,1116.7 L2003.0,1125.2 L2003.7,1124.9 L2004.4,1122.8 L2005.1,1125.0 L2005.6,852.4 L2006.5,1116.6 L2007.0,1073.0 L2007.9,1124.4 L2008.6,1106.7 L2009.3,1118.1 L2010.0,1118.7 L2010.7,1123.4 L2011.4,1115.2 L2012.1,1114.4 L2012.8,1115.6 L2013.5,1117.8 L2014.2,1123.9 L2014.9,1122.9 L2015.6,1118.5 L2016.3,1123.0 L2017.0,1117.2 L2017.7,1124.0 L2018.4,1119.0 L2019.0,1109.0 L2019.5,1128.0 L2020.5,1125.2 L2021.2,1118.0 L2021.9,1105.4 L2022.6,1118.3 L2023.3,1122.7 L2024.0,1123.7 L2024.7,1125.4 L2025.4,1115.7 L2026.1,1123.5 L2026.8,1116.7 L2027.5,1122.6 L2028.2,1119.8 L2028.9,1124.8 L2029.6,1123.8 L2030.3,1119.1 L2031.0,1116.4 L2031.7,1123.5 L2032.4,1115.9 L2033.1,1118.7 L2033.8,1115.3 L2034.5,1116.6 L2035.2,1117.7 L2035.9,1116.7 L2036.6,1110.4 L2037.3,1105.4 L2038.0,1125.1 L2038.7,1117.9 L2039.4,1115.3 L2040.1,1117.7 L2040.8,1119.4 L2041.5,1116.2 L2042.2,1109.5 L2042.9,1115.7 L2043.6,1116.0 L2044.3,1119.1 L2045.0,1116.4 L2045.7,1122.9 L2046.4,1124.8 L2047.1,1118.2 L2047.8,1125.5 L2048.5,1123.9 L2049.2,1125.3 L2049.9,1122.9 L2050.6,1124.7 L2051.3,1124.6 L2052.0,1124.8 L2052.7,1123.9 L2053.4,1123.9 L2054.1,1116.9 L2054.8,1119.1 L2055.5,1111.0 L2056.2,1124.1 L2056.9,1116.3 L2057.6,1123.6 L2058.3,1123.9 L2059.0,1123.0 L2059.7,1123.0 L2060.4,1104.5 L2061.1,1125.4 L2061.8,1114.5 L2062.5,1125.2 L2063.2,1123.3 L2063.9,1115.8 L2064.6,1115.5 L2065.3,1119.2 L2066.0,1124.9 L2066.7,1123.2 L2067.4,1119.6 L2068.1,1116.8 L2068.8,1118.0 L2069.5,1119.3 L2070.2,1119.9 L2070.9,1116.4 L2071.6,1124.1 L2072.3,1124.0 L2073.0,1118.7 L2073.7,1122.8 L2074.7,989.1 L2075.1,1120.0 L2075.8,1119.4 L2076.5,1123.5 L2077.2,1106.2 L2077.9,1118.5 L2078.6,1106.0 L2079.3,1123.1 L2080.0,1097.0 L2080.7,1115.2 L2081.4,1116.6 L2082.1,1124.0 L2082.8,1123.0 L2083.5,1116.6 L2084.2,1110.7 L2084.9,1119.0 L2085.6,1124.7 L2086.3,1123.1 L2087.0,1118.7 L2087.7,1124.1 L2088.4,1116.6 L2089.1,1106.1 L2089.8,1122.6 L2090.5,1123.4 L2091.2,1119.6 L2091.9,1117.1 L2092.6,1125.1 L2093.3,1117.2 L2094.0,1115.5 L2094.7,1125.1 L2095.4,1123.3 L2096.1,1123.9 L2096.8,1118.1 L2097.4,1075.5 L2098.2,1124.6 L2098.9,1116.6 L2099.6,1116.4 L2100.3,1119.5 L2101.0,1116.1 L2101.7,1124.1 L2102.4,1118.0 L2103.1,1117.1 L2103.8,1124.7 L2104.5,1123.0 L2105.2,1124.4 L2105.9,1115.1 L2106.6,1125.3 L2107.3,1119.9 L2108.0,1123.5 L2108.7,1114.5 L2109.4,1123.1 L2110.1,1123.1 L2110.8,1118.5 L2111.5,1125.4 L2112.2,1122.8 L2112.9,1125.2 L2113.6,1123.5 L2114.3,1124.1 L2115.0,1116.8 L2115.7,1119.7 L2116.4,1117.4 L2117.1,1123.2 L2117.8,1124.0 L2118.5,1123.9 L2119.0,1097.0 L2119.9,1117.1 L2120.6,1116.6 L2121.3,1116.1 L2122.0,1124.7 L2122.7,1124.0 L2123.4,1116.3 L2124.1,1115.4 L2124.8,1115.2 L2125.5,1116.0 L2126.2,1123.1 L2126.9,1124.1 L2127.6,1115.4 L2128.3,1113.6 L2129.0,1125.0 L2130.0,1106.0 L2130.4,1123.4 L2131.1,1123.0 L2131.8,1118.5 L2132.5,1119.3 L2133.2,1112.6 L2133.9,1122.6 L2134.6,1119.6 L2135.3,1115.9 L2136.0,1109.4 L2136.7,1124.9 L2137.4,1116.1 L2138.1,1119.2 L2138.8,1106.5 L2139.5,1116.0 L2140.2,1125.2 L2140.9,1116.2 L2141.6,1124.9 L2142.2,1017.3 L2143.0,1124.1 L2143.7,1116.4 L2144.4,1125.4 L2145.1,1120.0 L2145.8,1118.2 L2146.5,1115.4 L2147.2,1116.2 L2147.9,1123.9 L2148.6,1124.3 L2149.3,1123.3 L2150.0,1123.0 L2150.7,1116.3 L2151.4,1125.0 L2152.1,1116.7 L2152.8,1123.8 L2153.5,1116.7 L2154.2,1116.2 L2154.9,1117.1 L2155.6,1125.2 L2156.3,1116.7 L2157.0,1123.2 L2157.7,1119.6 L2158.4,1123.6 L2159.1,1124.2 L2159.8,1119.6 L2160.5,1119.4 L2161.2,1118.3 L2161.9,1124.8 L2162.6,1115.3 L2163.3,1117.9 L2164.0,1114.4 L2164.7,1119.4 L2165.4,1114.7 L2166.1,1110.3 L2166.8,1113.8 L2167.5,1123.8 L2168.2,1119.4 L2168.9,1122.6 L2169.6,1118.7 L2170.3,1118.1 L2171.0,1124.2 L2171.7,1124.0 L2172.4,1116.3 L2173.1,1119.0 L2173.8,1124.9 L2174.5,1105.5 L2175.2,1122.6 L2175.9,1115.8 L2176.6,1106.6 L2177.0,1095.0 L2178.0,1123.9 L2178.7,1119.1 L2179.4,1118.7 L2180.1,1116.6 L2180.8,1124.1 L2181.5,1124.7 L2182.2,1118.2 L2182.9,1115.5 L2183.6,1117.8 L2184.3,1118.4 L2185.0,1123.6 L2185.7,1123.9 L2186.4,1118.2 L2187.0,1101.0 L2187.8,1123.1 L2188.5,1115.4 L2189.2,1117.3 L2189.9,1125.3 L2190.6,1118.1 L2191.3,1125.3 L2192.0,1124.8 L2192.7,1119.9 L2193.4,1117.6 L2194.1,1124.4 L2194.8,1122.5 L2195.5,1115.9 L2196.2,1124.0 L2196.9,1110.1 L2197.6,1122.6 L2198.3,1107.0 L2199.0,1119.2 L2199.7,1124.9 L2200.4,1119.3 L2201.1,1118.3 L2201.8,1124.8 L2202.5,1119.5 L2203.2,1115.1 L2203.9,1124.1 L2204.6,1124.8 L2205.3,1119.3 L2206.0,1122.7 L2206.7,1122.6 L2207.4,1124.7 L2208.1,1117.0 L2208.8,1117.4 L2209.5,1110.2 L2210.2,1123.3 L2210.9,1116.7 L2211.6,1061.7 L2212.3,1104.9 L2213.0,1122.7 L2213.7,1115.3 L2214.4,1117.0 L2215.1,1123.3 L2215.8,1123.8 L2216.5,1122.9 L2217.2,1115.9 L2217.9,1124.2 L2218.6,1115.6 L2219.3,1107.8 L2220.0,1118.4 L2220.7,1118.4 L2221.4,1119.3" fill="none" stroke="#6a9a1f" stroke-width="4" stroke-linejoin="round" stroke-linecap="round"/>
<path d="M232 1152.9 H2223" fill="none" stroke="#ff4530" stroke-width="4" stroke-linecap="round"/><path d="M1264.5 1152.9 V817.6" fill="none" stroke="#ff4530" stroke-width="4.6" stroke-linecap="round"/>
<circle cx="847.8" cy="1295.1" r="10.2" fill="none" stroke="#6a9a1f" stroke-width="3.6"/>
<circle cx="1255.7" cy="1295.1" r="10.2" fill="none" stroke="#ff4530" stroke-width="3.6"/>
</svg>
<div class="t" style="right:2191px;top:806.1px;font-size:25px;color:#0a0a0a;letter-spacing:-0.9px">10 ms</div>
<div class="t" style="right:2191px;top:873.1px;font-size:25px;color:#0a0a0a;letter-spacing:-0.9px">8 ms</div>
<div class="t" style="right:2191px;top:940.1px;font-size:25px;color:#0a0a0a;letter-spacing:-0.9px">6 ms</div>
<div class="t" style="right:2191px;top:1007.1px;font-size:25px;color:#0a0a0a;letter-spacing:-0.9px">4 ms</div>
<div class="t" style="right:2191px;top:1074.1px;font-size:25px;color:#0a0a0a;letter-spacing:-0.9px">2 ms</div>
<div class="t" style="right:2191px;top:1141.1px;font-size:25px;color:#0a0a0a;letter-spacing:-0.9px">0 ms</div>
<div class="t c" style="left:258.5px;width:120px;top:1182.7px;font-size:24px;color:#0a0a0a;letter-spacing:0.6px">18:00</div>
<div class="t c" style="left:258.5px;width:120px;top:1218.9px;font-size:24px;color:#0a0a0a;letter-spacing:0.7px">6/22/25</div>
<div class="t c" style="left:382.9px;width:120px;top:1182.7px;font-size:24px;color:#0a0a0a;letter-spacing:0.6px">00:00</div>
<div class="t c" style="left:382.9px;width:120px;top:1218.9px;font-size:24px;color:#0a0a0a;letter-spacing:0.7px">6/23</div>
<div class="t c" style="left:507.3px;width:120px;top:1182.7px;font-size:24px;color:#0a0a0a;letter-spacing:0.6px">06:00</div>
<div class="t c" style="left:631.7px;width:120px;top:1182.7px;font-size:24px;color:#0a0a0a;letter-spacing:0.6px">12:00</div>
<div class="t c" style="left:756.1px;width:120px;top:1182.7px;font-size:24px;color:#0a0a0a;letter-spacing:0.6px">18:00</div>
<div class="t c" style="left:880.5px;width:120px;top:1182.7px;font-size:24px;color:#0a0a0a;letter-spacing:0.6px">00:00</div>
<div class="t c" style="left:880.5px;width:120px;top:1218.9px;font-size:24px;color:#0a0a0a;letter-spacing:0.7px">6/24</div>
<div class="t c" style="left:1005.0px;width:120px;top:1182.7px;font-size:24px;color:#0a0a0a;letter-spacing:0.6px">06:00</div>
<div class="t c" style="left:1129.4px;width:120px;top:1182.7px;font-size:24px;color:#0a0a0a;letter-spacing:0.6px">12:00</div>
<div class="t c" style="left:1253.8px;width:120px;top:1182.7px;font-size:24px;color:#0a0a0a;letter-spacing:0.6px">18:00</div>
<div class="t c" style="left:1378.2px;width:120px;top:1182.7px;font-size:24px;color:#0a0a0a;letter-spacing:0.6px">00:00</div>
<div class="t c" style="left:1378.2px;width:120px;top:1218.9px;font-size:24px;color:#0a0a0a;letter-spacing:0.7px">6/25</div>
<div class="t c" style="left:1502.6px;width:120px;top:1182.7px;font-size:24px;color:#0a0a0a;letter-spacing:0.6px">06:00</div>
<div class="t c" style="left:1627.0px;width:120px;top:1182.7px;font-size:24px;color:#0a0a0a;letter-spacing:0.6px">12:00</div>
<div class="t c" style="left:1751.4px;width:120px;top:1182.7px;font-size:24px;color:#0a0a0a;letter-spacing:0.6px">18:00</div>
<div class="t c" style="left:1875.8px;width:120px;top:1182.7px;font-size:24px;color:#0a0a0a;letter-spacing:0.6px">00:00</div>
<div class="t c" style="left:1875.8px;width:120px;top:1218.9px;font-size:24px;color:#0a0a0a;letter-spacing:0.7px">6/26</div>
<div class="t c" style="left:2000.2px;width:120px;top:1182.7px;font-size:24px;color:#0a0a0a;letter-spacing:0.6px">06:00</div>
<div class="t c" style="left:2124.6px;width:120px;top:1182.7px;font-size:24px;color:#0a0a0a;letter-spacing:0.6px">12:00</div>
<div class="t" style="left:877.0px;top:1282.8px;font-size:25.5px;font-weight:400;color:#1c1c1c;letter-spacing:0.42px;-webkit-text-stroke:0.65px #1c1c1c;">Application Response Time</div>
<div class="t" style="left:1284.0px;top:1282.8px;font-size:25.5px;font-weight:400;color:#1c1c1c;letter-spacing:0.45px;-webkit-text-stroke:0.65px #1c1c1c;">Deployment Events</div>
</body></html>
